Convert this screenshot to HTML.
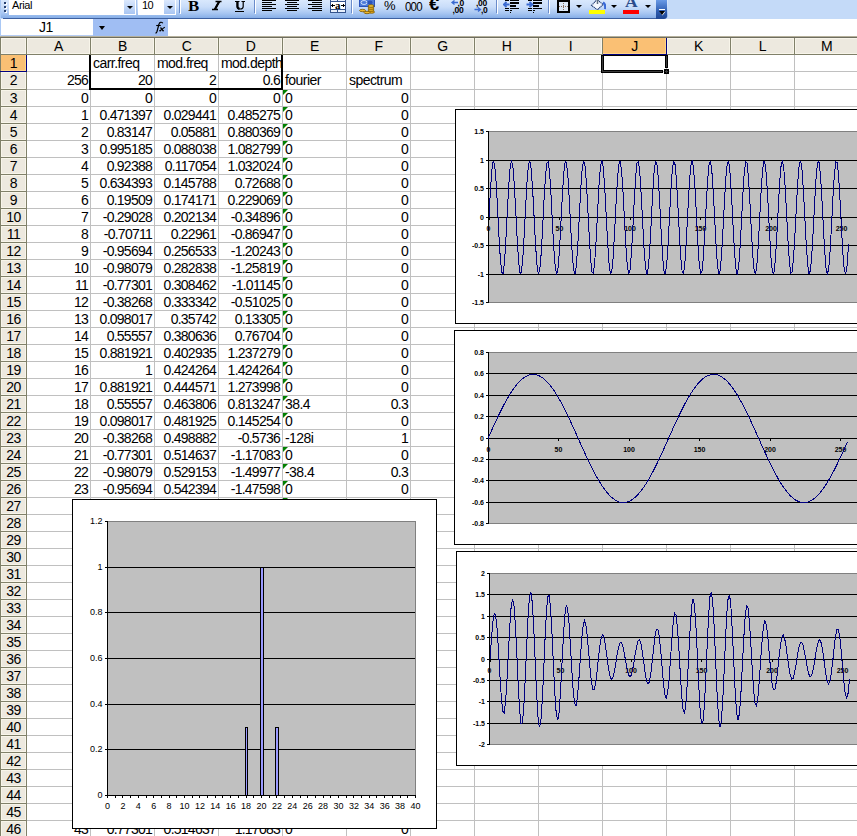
<!DOCTYPE html>
<html><head><meta charset="utf-8"><style>
html,body{margin:0;padding:0;}
body{width:857px;height:836px;overflow:hidden;position:relative;background:#fff;font-family:"Liberation Sans",sans-serif;color:#000;}
.a{position:absolute;}
.t{position:absolute;white-space:nowrap;font-family:"Liberation Sans",sans-serif;color:#000;}
svg{overflow:hidden;}
.cl{font:bold 7px "Liberation Sans",sans-serif;fill:#000;}
.dg{font:bold 8.5px "Liberation Sans",sans-serif;fill:#000;letter-spacing:-0.3px}
.bl{font:9px "Liberation Sans",sans-serif;fill:#000;}
</style></head><body>
<div class="a" style="left:0px;top:0px;width:857px;height:19px;background:#C4DAF8;"></div>
<div class="a" style="left:0;top:0;width:668px;height:18px;background:linear-gradient(#D9E8FD 0px,#C9DDF9 7px,#A9C7F2 13px,#86AEE7 18px);border-radius:0 0 3px 0"></div>
<div class="a" style="left:3px;top:18px;width:654px;height:1px;background:#3D60A0;"></div>
<div class="a" style="left:0px;top:0px;width:1px;height:18px;background:#A9C8F5;"></div>
<div class="a" style="left:5px;top:3px;width:2px;height:2px;background:#FFFFFF;"></div>
<div class="a" style="left:4px;top:2px;width:2px;height:2px;background:#27416F;"></div>
<div class="a" style="left:5px;top:7px;width:2px;height:2px;background:#FFFFFF;"></div>
<div class="a" style="left:4px;top:6px;width:2px;height:2px;background:#27416F;"></div>
<div class="a" style="left:5px;top:11px;width:2px;height:2px;background:#FFFFFF;"></div>
<div class="a" style="left:4px;top:10px;width:2px;height:2px;background:#27416F;"></div>
<div class="a" style="left:9px;top:0px;width:127px;height:15px;background:#FFFFFF;"></div>
<div class="a" style="left:124px;top:0;width:11px;height:14px;background:linear-gradient(#DCE9FD,#A9C6F2)"></div>
<div class="a" style="left:127px;top:6px;width:0;height:0;border-left:3px solid transparent;border-right:3px solid transparent;border-top:3px solid #000"></div>
<div class="t" style="left:12px;top:-2px;width:80px;height:14px;line-height:14px;font-size:11px;text-align:left;letter-spacing:-0.4px;">Arial</div>
<div class="a" style="left:136px;top:0px;width:1px;height:15px;background:#A9C5EF;"></div>
<div class="a" style="left:138px;top:0px;width:38px;height:15px;background:#FFFFFF;"></div>
<div class="a" style="left:164px;top:0;width:11px;height:14px;background:linear-gradient(#DCE9FD,#A9C6F2)"></div>
<div class="a" style="left:167px;top:6px;width:0;height:0;border-left:3px solid transparent;border-right:3px solid transparent;border-top:3px solid #000"></div>
<div class="t" style="left:142px;top:-2px;width:20px;height:14px;line-height:14px;font-size:11px;text-align:left;letter-spacing:-0.5px;">10</div>
<div class="a" style="left:179px;top:0px;width:1px;height:13px;background:#6A8CCB;"></div>
<div class="a" style="left:180px;top:0px;width:1px;height:14px;background:#FFFFFF;"></div>
<div class="t" style="left:188px;top:0px;font:bold 14px 'Liberation Serif',serif;line-height:14px;transform:scaleX(1.2);transform-origin:0 0;">B</div>
<svg class="a" style="left:210px;top:0" width="14" height="12"><path d="M5.5 1.5H11.5M2 9.5H8M9.2 1.5L4.8 9.5" stroke="#000" stroke-width="1.6" fill="none"/><path d="M9.2 1.5L4.8 9.5" stroke="#000" stroke-width="2.1"/></svg>
<svg class="a" style="left:234px;top:0" width="12" height="11"><path d="M1 1.5H5.5M7.5 1.5H11M3.2 1.5V6.5Q3.2 9 6.2 9Q9.2 9 9.2 6.5V1.5" stroke="#000" stroke-width="1.2" fill="none"/><path d="M3.5 1.5V6.5Q3.5 8.5 5.5 8.7" stroke="#000" stroke-width="2.2" fill="none"/></svg>
<div class="a" style="left:235px;top:11px;width:9px;height:1px;background:#000;"></div>
<div class="a" style="left:254px;top:0px;width:1px;height:13px;background:#6A8CCB;"></div>
<div class="a" style="left:255px;top:0px;width:1px;height:14px;background:#FFFFFF;"></div>
<div class="a" style="left:262px;top:0px;width:14px;height:1px;background:#000;"></div>
<div class="a" style="left:262px;top:2px;width:10px;height:1px;background:#000;"></div>
<div class="a" style="left:262px;top:4px;width:14px;height:1px;background:#000;"></div>
<div class="a" style="left:262px;top:6px;width:10px;height:1px;background:#000;"></div>
<div class="a" style="left:262px;top:8px;width:14px;height:1px;background:#000;"></div>
<div class="a" style="left:262px;top:10px;width:10px;height:1px;background:#000;"></div>
<div class="a" style="left:285px;top:0px;width:14px;height:1px;background:#000;"></div>
<div class="a" style="left:287px;top:2px;width:10px;height:1px;background:#000;"></div>
<div class="a" style="left:285px;top:4px;width:14px;height:1px;background:#000;"></div>
<div class="a" style="left:287px;top:6px;width:10px;height:1px;background:#000;"></div>
<div class="a" style="left:285px;top:8px;width:14px;height:1px;background:#000;"></div>
<div class="a" style="left:287px;top:10px;width:10px;height:1px;background:#000;"></div>
<div class="a" style="left:308px;top:0px;width:14px;height:1px;background:#000;"></div>
<div class="a" style="left:312px;top:2px;width:10px;height:1px;background:#000;"></div>
<div class="a" style="left:308px;top:4px;width:14px;height:1px;background:#000;"></div>
<div class="a" style="left:312px;top:6px;width:10px;height:1px;background:#000;"></div>
<div class="a" style="left:308px;top:8px;width:14px;height:1px;background:#000;"></div>
<div class="a" style="left:312px;top:10px;width:10px;height:1px;background:#000;"></div>
<div class="a" style="left:330px;top:0px;width:16px;height:13px;background:#34538C;"></div>
<div class="a" style="left:331px;top:0px;width:6px;height:1px;background:#E8F0FC;"></div>
<div class="a" style="left:338px;top:0px;width:7px;height:1px;background:#E8F0FC;"></div>
<div class="a" style="left:331px;top:2px;width:14px;height:7px;background:#FFFFFF;"></div>
<div class="a" style="left:331px;top:10px;width:6px;height:2px;background:#E8F0FC;"></div>
<div class="a" style="left:338px;top:10px;width:7px;height:2px;background:#E8F0FC;"></div>
<div class="a" style="left:331px;top:5px;width:4px;height:1px;background:#000;"></div>
<div class="a" style="left:332px;top:4px;width:1px;height:3px;background:#000;"></div>
<div class="a" style="left:341px;top:5px;width:4px;height:1px;background:#000;"></div>
<div class="a" style="left:343px;top:4px;width:1px;height:3px;background:#000;"></div>
<div class="t" style="left:335px;top:-1px;font:bold 11px 'Liberation Serif',serif;line-height:12px;">a</div>
<div class="a" style="left:351px;top:0px;width:1px;height:13px;background:#6A8CCB;"></div>
<div class="a" style="left:352px;top:0px;width:1px;height:14px;background:#FFFFFF;"></div>
<svg class="a" style="left:359px;top:0" width="17" height="15" viewBox="0 0 17 15"><rect x="0" y="0" width="16" height="7" fill="#2A52B8"/><rect x="1" y="0" width="14" height="6" fill="#4C7AD8"/><ellipse cx="5" cy="2.5" rx="3" ry="2" fill="none" stroke="#C8DAF6" stroke-width="1"/><ellipse cx="11" cy="2.5" rx="2.5" ry="2" fill="#2A52B8"/><g stroke="#7A5800" stroke-width="0.8"><ellipse cx="12.5" cy="12" rx="3" ry="1.3" fill="#E8A818"/><ellipse cx="12" cy="10" rx="3" ry="1.3" fill="#F0B828"/><ellipse cx="12" cy="8" rx="3" ry="1.3" fill="#F0B828"/><ellipse cx="12" cy="6" rx="3" ry="1.3" fill="#F4C838"/><ellipse cx="3.5" cy="10.5" rx="3" ry="1.2" fill="#F0B828"/><ellipse cx="8" cy="12.5" rx="3" ry="1.2" fill="#F0B828"/></g></svg>
<div class="t" style="left:384px;top:-1px;font-size:13px;line-height:14px;">%</div>
<div class="t" style="left:405px;top:-1px;font-size:11.5px;line-height:14px;letter-spacing:-0.8px;transform:scaleY(1.1);transform-origin:0 0">000</div>
<div class="t" style="left:429px;top:-3px;font:bold 16px 'Liberation Sans',sans-serif;line-height:16px;transform:scaleX(1.15);transform-origin:0 0">&#8364;</div>
<svg class="a" style="left:448px;top:0" width="48" height="15"><path d="M4.5 2.5H10M6.5 0.5L4 2.5L6.5 4.5" stroke="#3A6AD0" stroke-width="1.3" fill="none"/><text x="9.5" y="5.5" class="dg">,0</text><text x="4.5" y="12.5" class="dg">,00</text><text x="28" y="5.5" class="dg">,00</text><path d="M26.5 9.5H32.5M30 7.5L32.5 9.5L30 11.5" stroke="#3A6AD0" stroke-width="1.3" fill="none"/><text x="33" y="12.5" class="dg">,0</text></svg>
<div class="a" style="left:496px;top:0px;width:1px;height:13px;background:#6A8CCB;"></div>
<div class="a" style="left:497px;top:0px;width:1px;height:14px;background:#FFFFFF;"></div>
<div class="a" style="left:505px;top:0px;width:4px;height:1px;background:#000;"></div>
<div class="a" style="left:510px;top:0px;width:9px;height:1px;background:#000;"></div>
<div class="a" style="left:510px;top:2px;width:9px;height:2px;background:#000;"></div>
<div class="a" style="left:510px;top:5px;width:6px;height:2px;background:#000;"></div>
<div class="a" style="left:505px;top:8px;width:4px;height:1px;background:#000;"></div>
<div class="a" style="left:510px;top:8px;width:9px;height:1px;background:#000;"></div>
<div class="a" style="left:505px;top:10px;width:4px;height:1px;background:#000;"></div>
<div class="a" style="left:510px;top:10px;width:2px;height:1px;background:#000;"></div>
<div class="a" style="left:510px;top:12px;width:1px;height:1px;background:#000;"></div>
<svg class="a" style="left:503px;top:0" width="8" height="8"><path d="M6.5 4.5H0.8M3.5 2L0.8 4.5L3.5 7" stroke="#3A6AD0" stroke-width="1.8" fill="none"/></svg>
<div class="a" style="left:528px;top:0px;width:4px;height:1px;background:#000;"></div>
<div class="a" style="left:533px;top:0px;width:9px;height:1px;background:#000;"></div>
<div class="a" style="left:533px;top:2px;width:9px;height:2px;background:#000;"></div>
<div class="a" style="left:533px;top:5px;width:6px;height:2px;background:#000;"></div>
<div class="a" style="left:528px;top:8px;width:4px;height:1px;background:#000;"></div>
<div class="a" style="left:533px;top:8px;width:9px;height:1px;background:#000;"></div>
<div class="a" style="left:528px;top:10px;width:4px;height:1px;background:#000;"></div>
<div class="a" style="left:533px;top:10px;width:2px;height:1px;background:#000;"></div>
<div class="a" style="left:533px;top:12px;width:1px;height:1px;background:#000;"></div>
<svg class="a" style="left:526px;top:0" width="8" height="8"><path d="M0.5 4.5H6.5M3.5 2L6.5 4.5L3.5 7" stroke="#3A6AD0" stroke-width="1.8" fill="none"/></svg>
<div class="a" style="left:548px;top:0px;width:1px;height:13px;background:#6A8CCB;"></div>
<div class="a" style="left:549px;top:0px;width:1px;height:14px;background:#FFFFFF;"></div>
<div class="a" style="left:557px;top:0px;width:13px;height:13px;background:#000;"></div>
<div class="a" style="left:559px;top:2px;width:9px;height:9px;background:#DCE8F8;"></div>
<div class="a" style="left:563px;top:3px;width:1px;height:1px;background:#8A7060;"></div>
<div class="a" style="left:563px;top:5px;width:1px;height:1px;background:#8A7060;"></div>
<div class="a" style="left:563px;top:7px;width:1px;height:1px;background:#8A7060;"></div>
<div class="a" style="left:563px;top:9px;width:1px;height:1px;background:#8A7060;"></div>
<div class="a" style="left:559px;top:6px;width:1px;height:1px;background:#8A7060;"></div>
<div class="a" style="left:561px;top:6px;width:1px;height:1px;background:#8A7060;"></div>
<div class="a" style="left:565px;top:6px;width:1px;height:1px;background:#8A7060;"></div>
<div class="a" style="left:567px;top:6px;width:1px;height:1px;background:#8A7060;"></div>
<div class="a" style="left:563px;top:6px;width:1px;height:1px;background:#8A7060;"></div>
<div class="a" style="left:576px;top:5px;width:0;height:0;border-left:3px solid transparent;border-right:3px solid transparent;border-top:3px solid #000"></div>
<svg class="a" style="left:589px;top:0" width="17" height="11"><path d="M2.5 5.5L8 -0.5L14 4.5L8.5 9.8Z" fill="#F4F8FF" stroke="#1E3A70" stroke-width="1.1" stroke-dasharray="1.2 0.6"/><path d="M8.5 0v4" stroke="#607080" stroke-width="1.5"/><path d="M14 2.5q3 2 2 6.5" stroke="#3A6AD8" stroke-width="2.2" fill="none"/></svg>
<div class="a" style="left:589px;top:10px;width:16px;height:4px;background:#FFFF00;"></div>
<div class="a" style="left:611px;top:5px;width:0;height:0;border-left:3px solid transparent;border-right:3px solid transparent;border-top:3px solid #000"></div>
<div class="t" style="left:625px;top:-4px;font:bold 14px 'Liberation Serif',serif;line-height:14px;color:#2B4C8C;transform:scaleX(1.25);transform-origin:0 0">A</div>
<div class="a" style="left:623px;top:10px;width:16px;height:4px;background:#FF0000;"></div>
<div class="a" style="left:645px;top:5px;width:0;height:0;border-left:3px solid transparent;border-right:3px solid transparent;border-top:3px solid #000"></div>
<div class="a" style="left:656px;top:0;width:11px;height:19px;background:linear-gradient(#6A9AE6,#2D5CB0 60%,#1D4694);border-radius:0 0 3px 0"></div>
<div class="a" style="left:659px;top:9px;width:6px;height:1px;background:#FFFFFF;"></div>
<svg class="a" style="left:658px;top:10px" width="9" height="7"><path d="M1.5 1.5L7.5 1.5L4.5 5.5Z" fill="#fff"/><path d="M1 1L7 1L4 5Z" fill="#000"/></svg>
<div class="a" style="left:0px;top:19px;width:857px;height:17px;background:#FFFFFF;"></div>
<div class="a" style="left:0px;top:19px;width:1px;height:17px;background:#A9C8F5;"></div>
<div class="a" style="left:93px;top:19px;width:75px;height:17px;background:#A0BEF3;"></div>
<div class="a" style="left:99px;top:26px;width:0;height:0;border-left:3.5px solid transparent;border-right:3.5px solid transparent;border-top:4px solid #000"></div>
<div class="t" style="left:0px;top:19px;width:92px;height:16px;line-height:16px;font-size:14px;text-align:center;letter-spacing:-0.5px;">J1</div>
<svg class="a" style="left:150px;top:19px" width="18" height="16"><path d="M12.8 4.3Q12 3 10.5 3.3Q9.3 3.6 8.9 5.5L7 12.5Q6.5 14 5.5 14.2" stroke="#000" stroke-width="1.2" fill="none"/><path d="M6.2 6.5H10.8" stroke="#000" stroke-width="1.1"/><path d="M10.5 8.5L13.2 11.8M14.8 8.3Q13.5 9 11.8 10.5L9.8 11.8" stroke="#000" stroke-width="1.2" fill="none"/><path d="M9.2 11.8H11M12.5 11.8H14" stroke="#000" stroke-width="1"/></svg>
<div class="a" style="left:0px;top:35px;width:93px;height:1px;background:#B5CDF5;"></div>
<div class="a" style="left:0px;top:36px;width:857px;height:1px;background:#B5B09B;"></div>
<div class="a" style="left:0px;top:37px;width:857px;height:1px;background:#6E6D5E;"></div>
<div class="a" style="left:0px;top:38px;width:857px;height:16px;background:#EDE9DF;"></div>
<div class="a" style="left:0px;top:54px;width:857px;height:1px;background:#808069;"></div>
<div class="a" style="left:1px;top:38px;width:857px;height:1px;background:#F8F5EA;"></div>
<div class="a" style="left:1px;top:53px;width:857px;height:1px;background:#F8F5EA;"></div>
<div class="a" style="left:25px;top:38px;width:1px;height:16px;background:#F8F5EA;"></div>
<div class="a" style="left:27px;top:38px;width:1px;height:16px;background:#F8F5EA;"></div>
<div class="a" style="left:89px;top:38px;width:1px;height:16px;background:#F8F5EA;"></div>
<div class="a" style="left:91px;top:38px;width:1px;height:16px;background:#F8F5EA;"></div>
<div class="a" style="left:153px;top:38px;width:1px;height:16px;background:#F8F5EA;"></div>
<div class="a" style="left:155px;top:38px;width:1px;height:16px;background:#F8F5EA;"></div>
<div class="a" style="left:217px;top:38px;width:1px;height:16px;background:#F8F5EA;"></div>
<div class="a" style="left:219px;top:38px;width:1px;height:16px;background:#F8F5EA;"></div>
<div class="a" style="left:281px;top:38px;width:1px;height:16px;background:#F8F5EA;"></div>
<div class="a" style="left:283px;top:38px;width:1px;height:16px;background:#F8F5EA;"></div>
<div class="a" style="left:345px;top:38px;width:1px;height:16px;background:#F8F5EA;"></div>
<div class="a" style="left:347px;top:38px;width:1px;height:16px;background:#F8F5EA;"></div>
<div class="a" style="left:409px;top:38px;width:1px;height:16px;background:#F8F5EA;"></div>
<div class="a" style="left:411px;top:38px;width:1px;height:16px;background:#F8F5EA;"></div>
<div class="a" style="left:473px;top:38px;width:1px;height:16px;background:#F8F5EA;"></div>
<div class="a" style="left:475px;top:38px;width:1px;height:16px;background:#F8F5EA;"></div>
<div class="a" style="left:537px;top:38px;width:1px;height:16px;background:#F8F5EA;"></div>
<div class="a" style="left:539px;top:38px;width:1px;height:16px;background:#F8F5EA;"></div>
<div class="a" style="left:601px;top:38px;width:1px;height:16px;background:#F8F5EA;"></div>
<div class="a" style="left:603px;top:38px;width:1px;height:16px;background:#F8F5EA;"></div>
<div class="a" style="left:665px;top:38px;width:1px;height:16px;background:#F8F5EA;"></div>
<div class="a" style="left:667px;top:38px;width:1px;height:16px;background:#F8F5EA;"></div>
<div class="a" style="left:729px;top:38px;width:1px;height:16px;background:#F8F5EA;"></div>
<div class="a" style="left:731px;top:38px;width:1px;height:16px;background:#F8F5EA;"></div>
<div class="a" style="left:793px;top:38px;width:1px;height:16px;background:#F8F5EA;"></div>
<div class="a" style="left:795px;top:38px;width:1px;height:16px;background:#F8F5EA;"></div>
<div class="a" style="left:857px;top:38px;width:1px;height:16px;background:#F8F5EA;"></div>
<div class="a" style="left:859px;top:38px;width:1px;height:16px;background:#F8F5EA;"></div>
<div class="a" style="left:1px;top:38px;width:1px;height:16px;background:#F8F5EA;"></div>
<div class="a" style="left:0px;top:38px;width:1px;height:17px;background:#808069;"></div>
<div class="a" style="left:26px;top:38px;width:1px;height:16px;background:#808069;"></div>
<div class="a" style="left:90px;top:38px;width:1px;height:16px;background:#808069;"></div>
<div class="a" style="left:154px;top:38px;width:1px;height:16px;background:#808069;"></div>
<div class="a" style="left:218px;top:38px;width:1px;height:16px;background:#808069;"></div>
<div class="a" style="left:282px;top:38px;width:1px;height:16px;background:#808069;"></div>
<div class="a" style="left:346px;top:38px;width:1px;height:16px;background:#808069;"></div>
<div class="a" style="left:410px;top:38px;width:1px;height:16px;background:#808069;"></div>
<div class="a" style="left:474px;top:38px;width:1px;height:16px;background:#808069;"></div>
<div class="a" style="left:538px;top:38px;width:1px;height:16px;background:#808069;"></div>
<div class="a" style="left:602px;top:38px;width:1px;height:16px;background:#808069;"></div>
<div class="a" style="left:666px;top:38px;width:1px;height:16px;background:#808069;"></div>
<div class="a" style="left:730px;top:38px;width:1px;height:16px;background:#808069;"></div>
<div class="a" style="left:794px;top:38px;width:1px;height:16px;background:#808069;"></div>
<div class="a" style="left:858px;top:38px;width:1px;height:16px;background:#808069;"></div>
<div class="a" style="left:603px;top:38px;width:63px;height:16px;background:#FAC074;"></div>
<div class="a" style="left:603px;top:53px;width:63px;height:1px;background:#FED688;"></div>
<div class="a" style="left:665px;top:38px;width:1px;height:16px;background:#FED688;"></div>
<div class="a" style="left:666px;top:38px;width:1px;height:17px;background:#000080;"></div>
<div class="a" style="left:603px;top:54px;width:64px;height:1px;background:#000080;"></div>
<div class="t" style="left:27px;top:38px;width:63px;height:16px;line-height:16px;font-size:14px;text-align:center;letter-spacing:-0.5px;">A</div>
<div class="t" style="left:91px;top:38px;width:63px;height:16px;line-height:16px;font-size:14px;text-align:center;letter-spacing:-0.5px;">B</div>
<div class="t" style="left:155px;top:38px;width:63px;height:16px;line-height:16px;font-size:14px;text-align:center;letter-spacing:-0.5px;">C</div>
<div class="t" style="left:219px;top:38px;width:63px;height:16px;line-height:16px;font-size:14px;text-align:center;letter-spacing:-0.5px;">D</div>
<div class="t" style="left:283px;top:38px;width:63px;height:16px;line-height:16px;font-size:14px;text-align:center;letter-spacing:-0.5px;">E</div>
<div class="t" style="left:347px;top:38px;width:63px;height:16px;line-height:16px;font-size:14px;text-align:center;letter-spacing:-0.5px;">F</div>
<div class="t" style="left:411px;top:38px;width:63px;height:16px;line-height:16px;font-size:14px;text-align:center;letter-spacing:-0.5px;">G</div>
<div class="t" style="left:475px;top:38px;width:63px;height:16px;line-height:16px;font-size:14px;text-align:center;letter-spacing:-0.5px;">H</div>
<div class="t" style="left:539px;top:38px;width:63px;height:16px;line-height:16px;font-size:14px;text-align:center;letter-spacing:-0.5px;">I</div>
<div class="t" style="left:603px;top:38px;width:63px;height:16px;line-height:16px;font-size:14px;text-align:center;letter-spacing:-0.5px;">J</div>
<div class="t" style="left:667px;top:38px;width:63px;height:16px;line-height:16px;font-size:14px;text-align:center;letter-spacing:-0.5px;">K</div>
<div class="t" style="left:731px;top:38px;width:63px;height:16px;line-height:16px;font-size:14px;text-align:center;letter-spacing:-0.5px;">L</div>
<div class="t" style="left:795px;top:38px;width:63px;height:16px;line-height:16px;font-size:14px;text-align:center;letter-spacing:-0.5px;">M</div>
<div class="a" style="left:0px;top:55px;width:26px;height:781px;background:#EDE9DF;"></div>
<div class="a" style="left:0px;top:55px;width:1px;height:781px;background:#808069;"></div>
<div class="a" style="left:26px;top:55px;width:1px;height:781px;background:#808069;"></div>
<div class="a" style="left:1px;top:55px;width:1px;height:781px;background:#F8F5EA;"></div>
<div class="a" style="left:25px;top:55px;width:1px;height:781px;background:#F8F5EA;"></div>
<div class="a" style="left:0px;top:71px;width:27px;height:1px;background:#808069;"></div>
<div class="a" style="left:1px;top:55px;width:25px;height:1px;background:#F8F5EA;"></div>
<div class="a" style="left:1px;top:70px;width:25px;height:1px;background:#F8F5EA;"></div>
<div class="a" style="left:0px;top:89px;width:27px;height:1px;background:#808069;"></div>
<div class="a" style="left:1px;top:72px;width:25px;height:1px;background:#F8F5EA;"></div>
<div class="a" style="left:1px;top:88px;width:25px;height:1px;background:#F8F5EA;"></div>
<div class="a" style="left:0px;top:106px;width:27px;height:1px;background:#808069;"></div>
<div class="a" style="left:1px;top:90px;width:25px;height:1px;background:#F8F5EA;"></div>
<div class="a" style="left:1px;top:105px;width:25px;height:1px;background:#F8F5EA;"></div>
<div class="a" style="left:0px;top:123px;width:27px;height:1px;background:#808069;"></div>
<div class="a" style="left:1px;top:107px;width:25px;height:1px;background:#F8F5EA;"></div>
<div class="a" style="left:1px;top:122px;width:25px;height:1px;background:#F8F5EA;"></div>
<div class="a" style="left:0px;top:140px;width:27px;height:1px;background:#808069;"></div>
<div class="a" style="left:1px;top:124px;width:25px;height:1px;background:#F8F5EA;"></div>
<div class="a" style="left:1px;top:139px;width:25px;height:1px;background:#F8F5EA;"></div>
<div class="a" style="left:0px;top:157px;width:27px;height:1px;background:#808069;"></div>
<div class="a" style="left:1px;top:141px;width:25px;height:1px;background:#F8F5EA;"></div>
<div class="a" style="left:1px;top:156px;width:25px;height:1px;background:#F8F5EA;"></div>
<div class="a" style="left:0px;top:174px;width:27px;height:1px;background:#808069;"></div>
<div class="a" style="left:1px;top:158px;width:25px;height:1px;background:#F8F5EA;"></div>
<div class="a" style="left:1px;top:173px;width:25px;height:1px;background:#F8F5EA;"></div>
<div class="a" style="left:0px;top:191px;width:27px;height:1px;background:#808069;"></div>
<div class="a" style="left:1px;top:175px;width:25px;height:1px;background:#F8F5EA;"></div>
<div class="a" style="left:1px;top:190px;width:25px;height:1px;background:#F8F5EA;"></div>
<div class="a" style="left:0px;top:208px;width:27px;height:1px;background:#808069;"></div>
<div class="a" style="left:1px;top:192px;width:25px;height:1px;background:#F8F5EA;"></div>
<div class="a" style="left:1px;top:207px;width:25px;height:1px;background:#F8F5EA;"></div>
<div class="a" style="left:0px;top:225px;width:27px;height:1px;background:#808069;"></div>
<div class="a" style="left:1px;top:209px;width:25px;height:1px;background:#F8F5EA;"></div>
<div class="a" style="left:1px;top:224px;width:25px;height:1px;background:#F8F5EA;"></div>
<div class="a" style="left:0px;top:242px;width:27px;height:1px;background:#808069;"></div>
<div class="a" style="left:1px;top:226px;width:25px;height:1px;background:#F8F5EA;"></div>
<div class="a" style="left:1px;top:241px;width:25px;height:1px;background:#F8F5EA;"></div>
<div class="a" style="left:0px;top:259px;width:27px;height:1px;background:#808069;"></div>
<div class="a" style="left:1px;top:243px;width:25px;height:1px;background:#F8F5EA;"></div>
<div class="a" style="left:1px;top:258px;width:25px;height:1px;background:#F8F5EA;"></div>
<div class="a" style="left:0px;top:276px;width:27px;height:1px;background:#808069;"></div>
<div class="a" style="left:1px;top:260px;width:25px;height:1px;background:#F8F5EA;"></div>
<div class="a" style="left:1px;top:275px;width:25px;height:1px;background:#F8F5EA;"></div>
<div class="a" style="left:0px;top:293px;width:27px;height:1px;background:#808069;"></div>
<div class="a" style="left:1px;top:277px;width:25px;height:1px;background:#F8F5EA;"></div>
<div class="a" style="left:1px;top:292px;width:25px;height:1px;background:#F8F5EA;"></div>
<div class="a" style="left:0px;top:310px;width:27px;height:1px;background:#808069;"></div>
<div class="a" style="left:1px;top:294px;width:25px;height:1px;background:#F8F5EA;"></div>
<div class="a" style="left:1px;top:309px;width:25px;height:1px;background:#F8F5EA;"></div>
<div class="a" style="left:0px;top:327px;width:27px;height:1px;background:#808069;"></div>
<div class="a" style="left:1px;top:311px;width:25px;height:1px;background:#F8F5EA;"></div>
<div class="a" style="left:1px;top:326px;width:25px;height:1px;background:#F8F5EA;"></div>
<div class="a" style="left:0px;top:344px;width:27px;height:1px;background:#808069;"></div>
<div class="a" style="left:1px;top:328px;width:25px;height:1px;background:#F8F5EA;"></div>
<div class="a" style="left:1px;top:343px;width:25px;height:1px;background:#F8F5EA;"></div>
<div class="a" style="left:0px;top:361px;width:27px;height:1px;background:#808069;"></div>
<div class="a" style="left:1px;top:345px;width:25px;height:1px;background:#F8F5EA;"></div>
<div class="a" style="left:1px;top:360px;width:25px;height:1px;background:#F8F5EA;"></div>
<div class="a" style="left:0px;top:378px;width:27px;height:1px;background:#808069;"></div>
<div class="a" style="left:1px;top:362px;width:25px;height:1px;background:#F8F5EA;"></div>
<div class="a" style="left:1px;top:377px;width:25px;height:1px;background:#F8F5EA;"></div>
<div class="a" style="left:0px;top:395px;width:27px;height:1px;background:#808069;"></div>
<div class="a" style="left:1px;top:379px;width:25px;height:1px;background:#F8F5EA;"></div>
<div class="a" style="left:1px;top:394px;width:25px;height:1px;background:#F8F5EA;"></div>
<div class="a" style="left:0px;top:412px;width:27px;height:1px;background:#808069;"></div>
<div class="a" style="left:1px;top:396px;width:25px;height:1px;background:#F8F5EA;"></div>
<div class="a" style="left:1px;top:411px;width:25px;height:1px;background:#F8F5EA;"></div>
<div class="a" style="left:0px;top:429px;width:27px;height:1px;background:#808069;"></div>
<div class="a" style="left:1px;top:413px;width:25px;height:1px;background:#F8F5EA;"></div>
<div class="a" style="left:1px;top:428px;width:25px;height:1px;background:#F8F5EA;"></div>
<div class="a" style="left:0px;top:446px;width:27px;height:1px;background:#808069;"></div>
<div class="a" style="left:1px;top:430px;width:25px;height:1px;background:#F8F5EA;"></div>
<div class="a" style="left:1px;top:445px;width:25px;height:1px;background:#F8F5EA;"></div>
<div class="a" style="left:0px;top:463px;width:27px;height:1px;background:#808069;"></div>
<div class="a" style="left:1px;top:447px;width:25px;height:1px;background:#F8F5EA;"></div>
<div class="a" style="left:1px;top:462px;width:25px;height:1px;background:#F8F5EA;"></div>
<div class="a" style="left:0px;top:480px;width:27px;height:1px;background:#808069;"></div>
<div class="a" style="left:1px;top:464px;width:25px;height:1px;background:#F8F5EA;"></div>
<div class="a" style="left:1px;top:479px;width:25px;height:1px;background:#F8F5EA;"></div>
<div class="a" style="left:0px;top:497px;width:27px;height:1px;background:#808069;"></div>
<div class="a" style="left:1px;top:481px;width:25px;height:1px;background:#F8F5EA;"></div>
<div class="a" style="left:1px;top:496px;width:25px;height:1px;background:#F8F5EA;"></div>
<div class="a" style="left:0px;top:514px;width:27px;height:1px;background:#808069;"></div>
<div class="a" style="left:1px;top:498px;width:25px;height:1px;background:#F8F5EA;"></div>
<div class="a" style="left:1px;top:513px;width:25px;height:1px;background:#F8F5EA;"></div>
<div class="a" style="left:0px;top:531px;width:27px;height:1px;background:#808069;"></div>
<div class="a" style="left:1px;top:515px;width:25px;height:1px;background:#F8F5EA;"></div>
<div class="a" style="left:1px;top:530px;width:25px;height:1px;background:#F8F5EA;"></div>
<div class="a" style="left:0px;top:548px;width:27px;height:1px;background:#808069;"></div>
<div class="a" style="left:1px;top:532px;width:25px;height:1px;background:#F8F5EA;"></div>
<div class="a" style="left:1px;top:547px;width:25px;height:1px;background:#F8F5EA;"></div>
<div class="a" style="left:0px;top:565px;width:27px;height:1px;background:#808069;"></div>
<div class="a" style="left:1px;top:549px;width:25px;height:1px;background:#F8F5EA;"></div>
<div class="a" style="left:1px;top:564px;width:25px;height:1px;background:#F8F5EA;"></div>
<div class="a" style="left:0px;top:582px;width:27px;height:1px;background:#808069;"></div>
<div class="a" style="left:1px;top:566px;width:25px;height:1px;background:#F8F5EA;"></div>
<div class="a" style="left:1px;top:581px;width:25px;height:1px;background:#F8F5EA;"></div>
<div class="a" style="left:0px;top:599px;width:27px;height:1px;background:#808069;"></div>
<div class="a" style="left:1px;top:583px;width:25px;height:1px;background:#F8F5EA;"></div>
<div class="a" style="left:1px;top:598px;width:25px;height:1px;background:#F8F5EA;"></div>
<div class="a" style="left:0px;top:616px;width:27px;height:1px;background:#808069;"></div>
<div class="a" style="left:1px;top:600px;width:25px;height:1px;background:#F8F5EA;"></div>
<div class="a" style="left:1px;top:615px;width:25px;height:1px;background:#F8F5EA;"></div>
<div class="a" style="left:0px;top:633px;width:27px;height:1px;background:#808069;"></div>
<div class="a" style="left:1px;top:617px;width:25px;height:1px;background:#F8F5EA;"></div>
<div class="a" style="left:1px;top:632px;width:25px;height:1px;background:#F8F5EA;"></div>
<div class="a" style="left:0px;top:650px;width:27px;height:1px;background:#808069;"></div>
<div class="a" style="left:1px;top:634px;width:25px;height:1px;background:#F8F5EA;"></div>
<div class="a" style="left:1px;top:649px;width:25px;height:1px;background:#F8F5EA;"></div>
<div class="a" style="left:0px;top:667px;width:27px;height:1px;background:#808069;"></div>
<div class="a" style="left:1px;top:651px;width:25px;height:1px;background:#F8F5EA;"></div>
<div class="a" style="left:1px;top:666px;width:25px;height:1px;background:#F8F5EA;"></div>
<div class="a" style="left:0px;top:684px;width:27px;height:1px;background:#808069;"></div>
<div class="a" style="left:1px;top:668px;width:25px;height:1px;background:#F8F5EA;"></div>
<div class="a" style="left:1px;top:683px;width:25px;height:1px;background:#F8F5EA;"></div>
<div class="a" style="left:0px;top:701px;width:27px;height:1px;background:#808069;"></div>
<div class="a" style="left:1px;top:685px;width:25px;height:1px;background:#F8F5EA;"></div>
<div class="a" style="left:1px;top:700px;width:25px;height:1px;background:#F8F5EA;"></div>
<div class="a" style="left:0px;top:718px;width:27px;height:1px;background:#808069;"></div>
<div class="a" style="left:1px;top:702px;width:25px;height:1px;background:#F8F5EA;"></div>
<div class="a" style="left:1px;top:717px;width:25px;height:1px;background:#F8F5EA;"></div>
<div class="a" style="left:0px;top:735px;width:27px;height:1px;background:#808069;"></div>
<div class="a" style="left:1px;top:719px;width:25px;height:1px;background:#F8F5EA;"></div>
<div class="a" style="left:1px;top:734px;width:25px;height:1px;background:#F8F5EA;"></div>
<div class="a" style="left:0px;top:752px;width:27px;height:1px;background:#808069;"></div>
<div class="a" style="left:1px;top:736px;width:25px;height:1px;background:#F8F5EA;"></div>
<div class="a" style="left:1px;top:751px;width:25px;height:1px;background:#F8F5EA;"></div>
<div class="a" style="left:0px;top:769px;width:27px;height:1px;background:#808069;"></div>
<div class="a" style="left:1px;top:753px;width:25px;height:1px;background:#F8F5EA;"></div>
<div class="a" style="left:1px;top:768px;width:25px;height:1px;background:#F8F5EA;"></div>
<div class="a" style="left:0px;top:786px;width:27px;height:1px;background:#808069;"></div>
<div class="a" style="left:1px;top:770px;width:25px;height:1px;background:#F8F5EA;"></div>
<div class="a" style="left:1px;top:785px;width:25px;height:1px;background:#F8F5EA;"></div>
<div class="a" style="left:0px;top:803px;width:27px;height:1px;background:#808069;"></div>
<div class="a" style="left:1px;top:787px;width:25px;height:1px;background:#F8F5EA;"></div>
<div class="a" style="left:1px;top:802px;width:25px;height:1px;background:#F8F5EA;"></div>
<div class="a" style="left:0px;top:820px;width:27px;height:1px;background:#808069;"></div>
<div class="a" style="left:1px;top:804px;width:25px;height:1px;background:#F8F5EA;"></div>
<div class="a" style="left:1px;top:819px;width:25px;height:1px;background:#F8F5EA;"></div>
<div class="a" style="left:0px;top:837px;width:27px;height:1px;background:#808069;"></div>
<div class="a" style="left:1px;top:821px;width:25px;height:1px;background:#F8F5EA;"></div>
<div class="a" style="left:1px;top:836px;width:25px;height:1px;background:#F8F5EA;"></div>
<div class="a" style="left:0px;top:55px;width:26px;height:16px;background:#FAC074;"></div>
<div class="a" style="left:1px;top:70px;width:25px;height:1px;background:#FED688;"></div>
<div class="a" style="left:25px;top:55px;width:1px;height:16px;background:#FED688;"></div>
<div class="a" style="left:0px;top:55px;width:1px;height:16px;background:#808069;"></div>
<div class="a" style="left:26px;top:55px;width:1px;height:17px;background:#000080;"></div>
<div class="a" style="left:0px;top:71px;width:27px;height:1px;background:#000080;"></div>
<div class="t" style="left:1px;top:55px;width:25px;height:16px;line-height:16px;font-size:14px;text-align:center;letter-spacing:-0.5px;">1</div>
<div class="t" style="left:1px;top:72px;width:25px;height:17px;line-height:17px;font-size:14px;text-align:center;letter-spacing:-0.5px;">2</div>
<div class="t" style="left:1px;top:90px;width:25px;height:16px;line-height:16px;font-size:14px;text-align:center;letter-spacing:-0.5px;">3</div>
<div class="t" style="left:1px;top:107px;width:25px;height:16px;line-height:16px;font-size:14px;text-align:center;letter-spacing:-0.5px;">4</div>
<div class="t" style="left:1px;top:124px;width:25px;height:16px;line-height:16px;font-size:14px;text-align:center;letter-spacing:-0.5px;">5</div>
<div class="t" style="left:1px;top:141px;width:25px;height:16px;line-height:16px;font-size:14px;text-align:center;letter-spacing:-0.5px;">6</div>
<div class="t" style="left:1px;top:158px;width:25px;height:16px;line-height:16px;font-size:14px;text-align:center;letter-spacing:-0.5px;">7</div>
<div class="t" style="left:1px;top:175px;width:25px;height:16px;line-height:16px;font-size:14px;text-align:center;letter-spacing:-0.5px;">8</div>
<div class="t" style="left:1px;top:192px;width:25px;height:16px;line-height:16px;font-size:14px;text-align:center;letter-spacing:-0.5px;">9</div>
<div class="t" style="left:1px;top:209px;width:25px;height:16px;line-height:16px;font-size:14px;text-align:center;letter-spacing:-0.5px;">10</div>
<div class="t" style="left:1px;top:226px;width:25px;height:16px;line-height:16px;font-size:14px;text-align:center;letter-spacing:-0.5px;">11</div>
<div class="t" style="left:1px;top:243px;width:25px;height:16px;line-height:16px;font-size:14px;text-align:center;letter-spacing:-0.5px;">12</div>
<div class="t" style="left:1px;top:260px;width:25px;height:16px;line-height:16px;font-size:14px;text-align:center;letter-spacing:-0.5px;">13</div>
<div class="t" style="left:1px;top:277px;width:25px;height:16px;line-height:16px;font-size:14px;text-align:center;letter-spacing:-0.5px;">14</div>
<div class="t" style="left:1px;top:294px;width:25px;height:16px;line-height:16px;font-size:14px;text-align:center;letter-spacing:-0.5px;">15</div>
<div class="t" style="left:1px;top:311px;width:25px;height:16px;line-height:16px;font-size:14px;text-align:center;letter-spacing:-0.5px;">16</div>
<div class="t" style="left:1px;top:328px;width:25px;height:16px;line-height:16px;font-size:14px;text-align:center;letter-spacing:-0.5px;">17</div>
<div class="t" style="left:1px;top:345px;width:25px;height:16px;line-height:16px;font-size:14px;text-align:center;letter-spacing:-0.5px;">18</div>
<div class="t" style="left:1px;top:362px;width:25px;height:16px;line-height:16px;font-size:14px;text-align:center;letter-spacing:-0.5px;">19</div>
<div class="t" style="left:1px;top:379px;width:25px;height:16px;line-height:16px;font-size:14px;text-align:center;letter-spacing:-0.5px;">20</div>
<div class="t" style="left:1px;top:396px;width:25px;height:16px;line-height:16px;font-size:14px;text-align:center;letter-spacing:-0.5px;">21</div>
<div class="t" style="left:1px;top:413px;width:25px;height:16px;line-height:16px;font-size:14px;text-align:center;letter-spacing:-0.5px;">22</div>
<div class="t" style="left:1px;top:430px;width:25px;height:16px;line-height:16px;font-size:14px;text-align:center;letter-spacing:-0.5px;">23</div>
<div class="t" style="left:1px;top:447px;width:25px;height:16px;line-height:16px;font-size:14px;text-align:center;letter-spacing:-0.5px;">24</div>
<div class="t" style="left:1px;top:464px;width:25px;height:16px;line-height:16px;font-size:14px;text-align:center;letter-spacing:-0.5px;">25</div>
<div class="t" style="left:1px;top:481px;width:25px;height:16px;line-height:16px;font-size:14px;text-align:center;letter-spacing:-0.5px;">26</div>
<div class="t" style="left:1px;top:498px;width:25px;height:16px;line-height:16px;font-size:14px;text-align:center;letter-spacing:-0.5px;">27</div>
<div class="t" style="left:1px;top:515px;width:25px;height:16px;line-height:16px;font-size:14px;text-align:center;letter-spacing:-0.5px;">28</div>
<div class="t" style="left:1px;top:532px;width:25px;height:16px;line-height:16px;font-size:14px;text-align:center;letter-spacing:-0.5px;">29</div>
<div class="t" style="left:1px;top:549px;width:25px;height:16px;line-height:16px;font-size:14px;text-align:center;letter-spacing:-0.5px;">30</div>
<div class="t" style="left:1px;top:566px;width:25px;height:16px;line-height:16px;font-size:14px;text-align:center;letter-spacing:-0.5px;">31</div>
<div class="t" style="left:1px;top:583px;width:25px;height:16px;line-height:16px;font-size:14px;text-align:center;letter-spacing:-0.5px;">32</div>
<div class="t" style="left:1px;top:600px;width:25px;height:16px;line-height:16px;font-size:14px;text-align:center;letter-spacing:-0.5px;">33</div>
<div class="t" style="left:1px;top:617px;width:25px;height:16px;line-height:16px;font-size:14px;text-align:center;letter-spacing:-0.5px;">34</div>
<div class="t" style="left:1px;top:634px;width:25px;height:16px;line-height:16px;font-size:14px;text-align:center;letter-spacing:-0.5px;">35</div>
<div class="t" style="left:1px;top:651px;width:25px;height:16px;line-height:16px;font-size:14px;text-align:center;letter-spacing:-0.5px;">36</div>
<div class="t" style="left:1px;top:668px;width:25px;height:16px;line-height:16px;font-size:14px;text-align:center;letter-spacing:-0.5px;">37</div>
<div class="t" style="left:1px;top:685px;width:25px;height:16px;line-height:16px;font-size:14px;text-align:center;letter-spacing:-0.5px;">38</div>
<div class="t" style="left:1px;top:702px;width:25px;height:16px;line-height:16px;font-size:14px;text-align:center;letter-spacing:-0.5px;">39</div>
<div class="t" style="left:1px;top:719px;width:25px;height:16px;line-height:16px;font-size:14px;text-align:center;letter-spacing:-0.5px;">40</div>
<div class="t" style="left:1px;top:736px;width:25px;height:16px;line-height:16px;font-size:14px;text-align:center;letter-spacing:-0.5px;">41</div>
<div class="t" style="left:1px;top:753px;width:25px;height:16px;line-height:16px;font-size:14px;text-align:center;letter-spacing:-0.5px;">42</div>
<div class="t" style="left:1px;top:770px;width:25px;height:16px;line-height:16px;font-size:14px;text-align:center;letter-spacing:-0.5px;">43</div>
<div class="t" style="left:1px;top:787px;width:25px;height:16px;line-height:16px;font-size:14px;text-align:center;letter-spacing:-0.5px;">44</div>
<div class="t" style="left:1px;top:804px;width:25px;height:16px;line-height:16px;font-size:14px;text-align:center;letter-spacing:-0.5px;">45</div>
<div class="t" style="left:1px;top:821px;width:25px;height:16px;line-height:16px;font-size:14px;text-align:center;letter-spacing:-0.5px;">46</div>
<div class="a" style="left:90px;top:55px;width:1px;height:781px;background:#C0C0C0;"></div>
<div class="a" style="left:154px;top:55px;width:1px;height:781px;background:#C0C0C0;"></div>
<div class="a" style="left:218px;top:55px;width:1px;height:781px;background:#C0C0C0;"></div>
<div class="a" style="left:282px;top:55px;width:1px;height:781px;background:#C0C0C0;"></div>
<div class="a" style="left:346px;top:55px;width:1px;height:781px;background:#C0C0C0;"></div>
<div class="a" style="left:410px;top:55px;width:1px;height:781px;background:#C0C0C0;"></div>
<div class="a" style="left:474px;top:55px;width:1px;height:781px;background:#C0C0C0;"></div>
<div class="a" style="left:538px;top:55px;width:1px;height:781px;background:#C0C0C0;"></div>
<div class="a" style="left:602px;top:55px;width:1px;height:781px;background:#C0C0C0;"></div>
<div class="a" style="left:666px;top:55px;width:1px;height:781px;background:#C0C0C0;"></div>
<div class="a" style="left:730px;top:55px;width:1px;height:781px;background:#C0C0C0;"></div>
<div class="a" style="left:794px;top:55px;width:1px;height:781px;background:#C0C0C0;"></div>
<div class="a" style="left:858px;top:55px;width:1px;height:781px;background:#C0C0C0;"></div>
<div class="a" style="left:27px;top:71px;width:830px;height:1px;background:#C0C0C0;"></div>
<div class="a" style="left:27px;top:89px;width:830px;height:1px;background:#C0C0C0;"></div>
<div class="a" style="left:27px;top:106px;width:830px;height:1px;background:#C0C0C0;"></div>
<div class="a" style="left:27px;top:123px;width:830px;height:1px;background:#C0C0C0;"></div>
<div class="a" style="left:27px;top:140px;width:830px;height:1px;background:#C0C0C0;"></div>
<div class="a" style="left:27px;top:157px;width:830px;height:1px;background:#C0C0C0;"></div>
<div class="a" style="left:27px;top:174px;width:830px;height:1px;background:#C0C0C0;"></div>
<div class="a" style="left:27px;top:191px;width:830px;height:1px;background:#C0C0C0;"></div>
<div class="a" style="left:27px;top:208px;width:830px;height:1px;background:#C0C0C0;"></div>
<div class="a" style="left:27px;top:225px;width:830px;height:1px;background:#C0C0C0;"></div>
<div class="a" style="left:27px;top:242px;width:830px;height:1px;background:#C0C0C0;"></div>
<div class="a" style="left:27px;top:259px;width:830px;height:1px;background:#C0C0C0;"></div>
<div class="a" style="left:27px;top:276px;width:830px;height:1px;background:#C0C0C0;"></div>
<div class="a" style="left:27px;top:293px;width:830px;height:1px;background:#C0C0C0;"></div>
<div class="a" style="left:27px;top:310px;width:830px;height:1px;background:#C0C0C0;"></div>
<div class="a" style="left:27px;top:327px;width:830px;height:1px;background:#C0C0C0;"></div>
<div class="a" style="left:27px;top:344px;width:830px;height:1px;background:#C0C0C0;"></div>
<div class="a" style="left:27px;top:361px;width:830px;height:1px;background:#C0C0C0;"></div>
<div class="a" style="left:27px;top:378px;width:830px;height:1px;background:#C0C0C0;"></div>
<div class="a" style="left:27px;top:395px;width:830px;height:1px;background:#C0C0C0;"></div>
<div class="a" style="left:27px;top:412px;width:830px;height:1px;background:#C0C0C0;"></div>
<div class="a" style="left:27px;top:429px;width:830px;height:1px;background:#C0C0C0;"></div>
<div class="a" style="left:27px;top:446px;width:830px;height:1px;background:#C0C0C0;"></div>
<div class="a" style="left:27px;top:463px;width:830px;height:1px;background:#C0C0C0;"></div>
<div class="a" style="left:27px;top:480px;width:830px;height:1px;background:#C0C0C0;"></div>
<div class="a" style="left:27px;top:497px;width:830px;height:1px;background:#C0C0C0;"></div>
<div class="a" style="left:27px;top:514px;width:830px;height:1px;background:#C0C0C0;"></div>
<div class="a" style="left:27px;top:531px;width:830px;height:1px;background:#C0C0C0;"></div>
<div class="a" style="left:27px;top:548px;width:830px;height:1px;background:#C0C0C0;"></div>
<div class="a" style="left:27px;top:565px;width:830px;height:1px;background:#C0C0C0;"></div>
<div class="a" style="left:27px;top:582px;width:830px;height:1px;background:#C0C0C0;"></div>
<div class="a" style="left:27px;top:599px;width:830px;height:1px;background:#C0C0C0;"></div>
<div class="a" style="left:27px;top:616px;width:830px;height:1px;background:#C0C0C0;"></div>
<div class="a" style="left:27px;top:633px;width:830px;height:1px;background:#C0C0C0;"></div>
<div class="a" style="left:27px;top:650px;width:830px;height:1px;background:#C0C0C0;"></div>
<div class="a" style="left:27px;top:667px;width:830px;height:1px;background:#C0C0C0;"></div>
<div class="a" style="left:27px;top:684px;width:830px;height:1px;background:#C0C0C0;"></div>
<div class="a" style="left:27px;top:701px;width:830px;height:1px;background:#C0C0C0;"></div>
<div class="a" style="left:27px;top:718px;width:830px;height:1px;background:#C0C0C0;"></div>
<div class="a" style="left:27px;top:735px;width:830px;height:1px;background:#C0C0C0;"></div>
<div class="a" style="left:27px;top:752px;width:830px;height:1px;background:#C0C0C0;"></div>
<div class="a" style="left:27px;top:769px;width:830px;height:1px;background:#C0C0C0;"></div>
<div class="a" style="left:27px;top:786px;width:830px;height:1px;background:#C0C0C0;"></div>
<div class="a" style="left:27px;top:803px;width:830px;height:1px;background:#C0C0C0;"></div>
<div class="a" style="left:27px;top:820px;width:830px;height:1px;background:#C0C0C0;"></div>
<div class="t" style="left:93px;top:55px;width:80px;height:16px;line-height:16px;font-size:14px;text-align:left;letter-spacing:-0.55px;">carr.freq</div>
<div class="t" style="left:157px;top:55px;width:80px;height:16px;line-height:16px;font-size:14px;text-align:left;letter-spacing:-0.55px;">mod.freq</div>
<div class="t" style="left:221px;top:55px;width:80px;height:16px;line-height:16px;font-size:14px;text-align:left;letter-spacing:-0.55px;">mod.depth</div>
<div class="t" style="left:7px;top:72px;width:81px;height:16px;line-height:16px;font-size:14px;text-align:right;letter-spacing:-0.75px;">256</div>
<div class="t" style="left:71px;top:72px;width:81px;height:16px;line-height:16px;font-size:14px;text-align:right;letter-spacing:-0.75px;">20</div>
<div class="t" style="left:135px;top:72px;width:81px;height:16px;line-height:16px;font-size:14px;text-align:right;letter-spacing:-0.75px;">2</div>
<div class="t" style="left:199px;top:72px;width:81px;height:16px;line-height:16px;font-size:14px;text-align:right;letter-spacing:-0.75px;">0.6</div>
<div class="t" style="left:285px;top:72px;width:80px;height:16px;line-height:16px;font-size:14px;text-align:left;letter-spacing:-0.55px;">fourier</div>
<div class="t" style="left:349px;top:72px;width:80px;height:16px;line-height:16px;font-size:14px;text-align:left;letter-spacing:-0.55px;">spectrum</div>
<div class="t" style="left:7px;top:90px;width:81px;height:16px;line-height:16px;font-size:14px;text-align:right;letter-spacing:-0.75px;">0</div>
<div class="t" style="left:71px;top:90px;width:81px;height:16px;line-height:16px;font-size:14px;text-align:right;letter-spacing:-0.75px;">0</div>
<div class="t" style="left:135px;top:90px;width:81px;height:16px;line-height:16px;font-size:14px;text-align:right;letter-spacing:-0.75px;">0</div>
<div class="t" style="left:199px;top:90px;width:81px;height:16px;line-height:16px;font-size:14px;text-align:right;letter-spacing:-0.75px;">0</div>
<div class="t" style="left:285px;top:90px;width:80px;height:16px;line-height:16px;font-size:14px;text-align:left;letter-spacing:-0.55px;">0</div>
<div class="t" style="left:327px;top:90px;width:81px;height:16px;line-height:16px;font-size:14px;text-align:right;letter-spacing:-0.75px;">0</div>
<div class="t" style="left:7px;top:107px;width:81px;height:16px;line-height:16px;font-size:14px;text-align:right;letter-spacing:-0.75px;">1</div>
<div class="t" style="left:71px;top:107px;width:81px;height:16px;line-height:16px;font-size:14px;text-align:right;letter-spacing:-0.75px;">0.471397</div>
<div class="t" style="left:135px;top:107px;width:81px;height:16px;line-height:16px;font-size:14px;text-align:right;letter-spacing:-0.75px;">0.029441</div>
<div class="t" style="left:199px;top:107px;width:81px;height:16px;line-height:16px;font-size:14px;text-align:right;letter-spacing:-0.75px;">0.485275</div>
<div class="t" style="left:285px;top:107px;width:80px;height:16px;line-height:16px;font-size:14px;text-align:left;letter-spacing:-0.55px;">0</div>
<div class="t" style="left:327px;top:107px;width:81px;height:16px;line-height:16px;font-size:14px;text-align:right;letter-spacing:-0.75px;">0</div>
<div class="t" style="left:7px;top:124px;width:81px;height:16px;line-height:16px;font-size:14px;text-align:right;letter-spacing:-0.75px;">2</div>
<div class="t" style="left:71px;top:124px;width:81px;height:16px;line-height:16px;font-size:14px;text-align:right;letter-spacing:-0.75px;">0.83147</div>
<div class="t" style="left:135px;top:124px;width:81px;height:16px;line-height:16px;font-size:14px;text-align:right;letter-spacing:-0.75px;">0.05881</div>
<div class="t" style="left:199px;top:124px;width:81px;height:16px;line-height:16px;font-size:14px;text-align:right;letter-spacing:-0.75px;">0.880369</div>
<div class="t" style="left:285px;top:124px;width:80px;height:16px;line-height:16px;font-size:14px;text-align:left;letter-spacing:-0.55px;">0</div>
<div class="t" style="left:327px;top:124px;width:81px;height:16px;line-height:16px;font-size:14px;text-align:right;letter-spacing:-0.75px;">0</div>
<div class="t" style="left:7px;top:141px;width:81px;height:16px;line-height:16px;font-size:14px;text-align:right;letter-spacing:-0.75px;">3</div>
<div class="t" style="left:71px;top:141px;width:81px;height:16px;line-height:16px;font-size:14px;text-align:right;letter-spacing:-0.75px;">0.995185</div>
<div class="t" style="left:135px;top:141px;width:81px;height:16px;line-height:16px;font-size:14px;text-align:right;letter-spacing:-0.75px;">0.088038</div>
<div class="t" style="left:199px;top:141px;width:81px;height:16px;line-height:16px;font-size:14px;text-align:right;letter-spacing:-0.75px;">1.082799</div>
<div class="t" style="left:285px;top:141px;width:80px;height:16px;line-height:16px;font-size:14px;text-align:left;letter-spacing:-0.55px;">0</div>
<div class="t" style="left:327px;top:141px;width:81px;height:16px;line-height:16px;font-size:14px;text-align:right;letter-spacing:-0.75px;">0</div>
<div class="t" style="left:7px;top:158px;width:81px;height:16px;line-height:16px;font-size:14px;text-align:right;letter-spacing:-0.75px;">4</div>
<div class="t" style="left:71px;top:158px;width:81px;height:16px;line-height:16px;font-size:14px;text-align:right;letter-spacing:-0.75px;">0.92388</div>
<div class="t" style="left:135px;top:158px;width:81px;height:16px;line-height:16px;font-size:14px;text-align:right;letter-spacing:-0.75px;">0.117054</div>
<div class="t" style="left:199px;top:158px;width:81px;height:16px;line-height:16px;font-size:14px;text-align:right;letter-spacing:-0.75px;">1.032024</div>
<div class="t" style="left:285px;top:158px;width:80px;height:16px;line-height:16px;font-size:14px;text-align:left;letter-spacing:-0.55px;">0</div>
<div class="t" style="left:327px;top:158px;width:81px;height:16px;line-height:16px;font-size:14px;text-align:right;letter-spacing:-0.75px;">0</div>
<div class="t" style="left:7px;top:175px;width:81px;height:16px;line-height:16px;font-size:14px;text-align:right;letter-spacing:-0.75px;">5</div>
<div class="t" style="left:71px;top:175px;width:81px;height:16px;line-height:16px;font-size:14px;text-align:right;letter-spacing:-0.75px;">0.634393</div>
<div class="t" style="left:135px;top:175px;width:81px;height:16px;line-height:16px;font-size:14px;text-align:right;letter-spacing:-0.75px;">0.145788</div>
<div class="t" style="left:199px;top:175px;width:81px;height:16px;line-height:16px;font-size:14px;text-align:right;letter-spacing:-0.75px;">0.72688</div>
<div class="t" style="left:285px;top:175px;width:80px;height:16px;line-height:16px;font-size:14px;text-align:left;letter-spacing:-0.55px;">0</div>
<div class="t" style="left:327px;top:175px;width:81px;height:16px;line-height:16px;font-size:14px;text-align:right;letter-spacing:-0.75px;">0</div>
<div class="t" style="left:7px;top:192px;width:81px;height:16px;line-height:16px;font-size:14px;text-align:right;letter-spacing:-0.75px;">6</div>
<div class="t" style="left:71px;top:192px;width:81px;height:16px;line-height:16px;font-size:14px;text-align:right;letter-spacing:-0.75px;">0.19509</div>
<div class="t" style="left:135px;top:192px;width:81px;height:16px;line-height:16px;font-size:14px;text-align:right;letter-spacing:-0.75px;">0.174171</div>
<div class="t" style="left:199px;top:192px;width:81px;height:16px;line-height:16px;font-size:14px;text-align:right;letter-spacing:-0.75px;">0.229069</div>
<div class="t" style="left:285px;top:192px;width:80px;height:16px;line-height:16px;font-size:14px;text-align:left;letter-spacing:-0.55px;">0</div>
<div class="t" style="left:327px;top:192px;width:81px;height:16px;line-height:16px;font-size:14px;text-align:right;letter-spacing:-0.75px;">0</div>
<div class="t" style="left:7px;top:209px;width:81px;height:16px;line-height:16px;font-size:14px;text-align:right;letter-spacing:-0.75px;">7</div>
<div class="t" style="left:71px;top:209px;width:81px;height:16px;line-height:16px;font-size:14px;text-align:right;letter-spacing:-0.75px;">-0.29028</div>
<div class="t" style="left:135px;top:209px;width:81px;height:16px;line-height:16px;font-size:14px;text-align:right;letter-spacing:-0.75px;">0.202134</div>
<div class="t" style="left:199px;top:209px;width:81px;height:16px;line-height:16px;font-size:14px;text-align:right;letter-spacing:-0.75px;">-0.34896</div>
<div class="t" style="left:285px;top:209px;width:80px;height:16px;line-height:16px;font-size:14px;text-align:left;letter-spacing:-0.55px;">0</div>
<div class="t" style="left:327px;top:209px;width:81px;height:16px;line-height:16px;font-size:14px;text-align:right;letter-spacing:-0.75px;">0</div>
<div class="t" style="left:7px;top:226px;width:81px;height:16px;line-height:16px;font-size:14px;text-align:right;letter-spacing:-0.75px;">8</div>
<div class="t" style="left:71px;top:226px;width:81px;height:16px;line-height:16px;font-size:14px;text-align:right;letter-spacing:-0.75px;">-0.70711</div>
<div class="t" style="left:135px;top:226px;width:81px;height:16px;line-height:16px;font-size:14px;text-align:right;letter-spacing:-0.75px;">0.22961</div>
<div class="t" style="left:199px;top:226px;width:81px;height:16px;line-height:16px;font-size:14px;text-align:right;letter-spacing:-0.75px;">-0.86947</div>
<div class="t" style="left:285px;top:226px;width:80px;height:16px;line-height:16px;font-size:14px;text-align:left;letter-spacing:-0.55px;">0</div>
<div class="t" style="left:327px;top:226px;width:81px;height:16px;line-height:16px;font-size:14px;text-align:right;letter-spacing:-0.75px;">0</div>
<div class="t" style="left:7px;top:243px;width:81px;height:16px;line-height:16px;font-size:14px;text-align:right;letter-spacing:-0.75px;">9</div>
<div class="t" style="left:71px;top:243px;width:81px;height:16px;line-height:16px;font-size:14px;text-align:right;letter-spacing:-0.75px;">-0.95694</div>
<div class="t" style="left:135px;top:243px;width:81px;height:16px;line-height:16px;font-size:14px;text-align:right;letter-spacing:-0.75px;">0.256533</div>
<div class="t" style="left:199px;top:243px;width:81px;height:16px;line-height:16px;font-size:14px;text-align:right;letter-spacing:-0.75px;">-1.20243</div>
<div class="t" style="left:285px;top:243px;width:80px;height:16px;line-height:16px;font-size:14px;text-align:left;letter-spacing:-0.55px;">0</div>
<div class="t" style="left:327px;top:243px;width:81px;height:16px;line-height:16px;font-size:14px;text-align:right;letter-spacing:-0.75px;">0</div>
<div class="t" style="left:7px;top:260px;width:81px;height:16px;line-height:16px;font-size:14px;text-align:right;letter-spacing:-0.75px;">10</div>
<div class="t" style="left:71px;top:260px;width:81px;height:16px;line-height:16px;font-size:14px;text-align:right;letter-spacing:-0.75px;">-0.98079</div>
<div class="t" style="left:135px;top:260px;width:81px;height:16px;line-height:16px;font-size:14px;text-align:right;letter-spacing:-0.75px;">0.282838</div>
<div class="t" style="left:199px;top:260px;width:81px;height:16px;line-height:16px;font-size:14px;text-align:right;letter-spacing:-0.75px;">-1.25819</div>
<div class="t" style="left:285px;top:260px;width:80px;height:16px;line-height:16px;font-size:14px;text-align:left;letter-spacing:-0.55px;">0</div>
<div class="t" style="left:327px;top:260px;width:81px;height:16px;line-height:16px;font-size:14px;text-align:right;letter-spacing:-0.75px;">0</div>
<div class="t" style="left:7px;top:277px;width:81px;height:16px;line-height:16px;font-size:14px;text-align:right;letter-spacing:-0.75px;">11</div>
<div class="t" style="left:71px;top:277px;width:81px;height:16px;line-height:16px;font-size:14px;text-align:right;letter-spacing:-0.75px;">-0.77301</div>
<div class="t" style="left:135px;top:277px;width:81px;height:16px;line-height:16px;font-size:14px;text-align:right;letter-spacing:-0.75px;">0.308462</div>
<div class="t" style="left:199px;top:277px;width:81px;height:16px;line-height:16px;font-size:14px;text-align:right;letter-spacing:-0.75px;">-1.01145</div>
<div class="t" style="left:285px;top:277px;width:80px;height:16px;line-height:16px;font-size:14px;text-align:left;letter-spacing:-0.55px;">0</div>
<div class="t" style="left:327px;top:277px;width:81px;height:16px;line-height:16px;font-size:14px;text-align:right;letter-spacing:-0.75px;">0</div>
<div class="t" style="left:7px;top:294px;width:81px;height:16px;line-height:16px;font-size:14px;text-align:right;letter-spacing:-0.75px;">12</div>
<div class="t" style="left:71px;top:294px;width:81px;height:16px;line-height:16px;font-size:14px;text-align:right;letter-spacing:-0.75px;">-0.38268</div>
<div class="t" style="left:135px;top:294px;width:81px;height:16px;line-height:16px;font-size:14px;text-align:right;letter-spacing:-0.75px;">0.333342</div>
<div class="t" style="left:199px;top:294px;width:81px;height:16px;line-height:16px;font-size:14px;text-align:right;letter-spacing:-0.75px;">-0.51025</div>
<div class="t" style="left:285px;top:294px;width:80px;height:16px;line-height:16px;font-size:14px;text-align:left;letter-spacing:-0.55px;">0</div>
<div class="t" style="left:327px;top:294px;width:81px;height:16px;line-height:16px;font-size:14px;text-align:right;letter-spacing:-0.75px;">0</div>
<div class="t" style="left:7px;top:311px;width:81px;height:16px;line-height:16px;font-size:14px;text-align:right;letter-spacing:-0.75px;">13</div>
<div class="t" style="left:71px;top:311px;width:81px;height:16px;line-height:16px;font-size:14px;text-align:right;letter-spacing:-0.75px;">0.098017</div>
<div class="t" style="left:135px;top:311px;width:81px;height:16px;line-height:16px;font-size:14px;text-align:right;letter-spacing:-0.75px;">0.35742</div>
<div class="t" style="left:199px;top:311px;width:81px;height:16px;line-height:16px;font-size:14px;text-align:right;letter-spacing:-0.75px;">0.13305</div>
<div class="t" style="left:285px;top:311px;width:80px;height:16px;line-height:16px;font-size:14px;text-align:left;letter-spacing:-0.55px;">0</div>
<div class="t" style="left:327px;top:311px;width:81px;height:16px;line-height:16px;font-size:14px;text-align:right;letter-spacing:-0.75px;">0</div>
<div class="t" style="left:7px;top:328px;width:81px;height:16px;line-height:16px;font-size:14px;text-align:right;letter-spacing:-0.75px;">14</div>
<div class="t" style="left:71px;top:328px;width:81px;height:16px;line-height:16px;font-size:14px;text-align:right;letter-spacing:-0.75px;">0.55557</div>
<div class="t" style="left:135px;top:328px;width:81px;height:16px;line-height:16px;font-size:14px;text-align:right;letter-spacing:-0.75px;">0.380636</div>
<div class="t" style="left:199px;top:328px;width:81px;height:16px;line-height:16px;font-size:14px;text-align:right;letter-spacing:-0.75px;">0.76704</div>
<div class="t" style="left:285px;top:328px;width:80px;height:16px;line-height:16px;font-size:14px;text-align:left;letter-spacing:-0.55px;">0</div>
<div class="t" style="left:327px;top:328px;width:81px;height:16px;line-height:16px;font-size:14px;text-align:right;letter-spacing:-0.75px;">0</div>
<div class="t" style="left:7px;top:345px;width:81px;height:16px;line-height:16px;font-size:14px;text-align:right;letter-spacing:-0.75px;">15</div>
<div class="t" style="left:71px;top:345px;width:81px;height:16px;line-height:16px;font-size:14px;text-align:right;letter-spacing:-0.75px;">0.881921</div>
<div class="t" style="left:135px;top:345px;width:81px;height:16px;line-height:16px;font-size:14px;text-align:right;letter-spacing:-0.75px;">0.402935</div>
<div class="t" style="left:199px;top:345px;width:81px;height:16px;line-height:16px;font-size:14px;text-align:right;letter-spacing:-0.75px;">1.237279</div>
<div class="t" style="left:285px;top:345px;width:80px;height:16px;line-height:16px;font-size:14px;text-align:left;letter-spacing:-0.55px;">0</div>
<div class="t" style="left:327px;top:345px;width:81px;height:16px;line-height:16px;font-size:14px;text-align:right;letter-spacing:-0.75px;">0</div>
<div class="t" style="left:7px;top:362px;width:81px;height:16px;line-height:16px;font-size:14px;text-align:right;letter-spacing:-0.75px;">16</div>
<div class="t" style="left:71px;top:362px;width:81px;height:16px;line-height:16px;font-size:14px;text-align:right;letter-spacing:-0.75px;">1</div>
<div class="t" style="left:135px;top:362px;width:81px;height:16px;line-height:16px;font-size:14px;text-align:right;letter-spacing:-0.75px;">0.424264</div>
<div class="t" style="left:199px;top:362px;width:81px;height:16px;line-height:16px;font-size:14px;text-align:right;letter-spacing:-0.75px;">1.424264</div>
<div class="t" style="left:285px;top:362px;width:80px;height:16px;line-height:16px;font-size:14px;text-align:left;letter-spacing:-0.55px;">0</div>
<div class="t" style="left:327px;top:362px;width:81px;height:16px;line-height:16px;font-size:14px;text-align:right;letter-spacing:-0.75px;">0</div>
<div class="t" style="left:7px;top:379px;width:81px;height:16px;line-height:16px;font-size:14px;text-align:right;letter-spacing:-0.75px;">17</div>
<div class="t" style="left:71px;top:379px;width:81px;height:16px;line-height:16px;font-size:14px;text-align:right;letter-spacing:-0.75px;">0.881921</div>
<div class="t" style="left:135px;top:379px;width:81px;height:16px;line-height:16px;font-size:14px;text-align:right;letter-spacing:-0.75px;">0.444571</div>
<div class="t" style="left:199px;top:379px;width:81px;height:16px;line-height:16px;font-size:14px;text-align:right;letter-spacing:-0.75px;">1.273998</div>
<div class="t" style="left:285px;top:379px;width:80px;height:16px;line-height:16px;font-size:14px;text-align:left;letter-spacing:-0.55px;">0</div>
<div class="t" style="left:327px;top:379px;width:81px;height:16px;line-height:16px;font-size:14px;text-align:right;letter-spacing:-0.75px;">0</div>
<div class="t" style="left:7px;top:396px;width:81px;height:16px;line-height:16px;font-size:14px;text-align:right;letter-spacing:-0.75px;">18</div>
<div class="t" style="left:71px;top:396px;width:81px;height:16px;line-height:16px;font-size:14px;text-align:right;letter-spacing:-0.75px;">0.55557</div>
<div class="t" style="left:135px;top:396px;width:81px;height:16px;line-height:16px;font-size:14px;text-align:right;letter-spacing:-0.75px;">0.463806</div>
<div class="t" style="left:199px;top:396px;width:81px;height:16px;line-height:16px;font-size:14px;text-align:right;letter-spacing:-0.75px;">0.813247</div>
<div class="t" style="left:285px;top:396px;width:80px;height:16px;line-height:16px;font-size:14px;text-align:left;letter-spacing:-0.55px;">38.4</div>
<div class="t" style="left:327px;top:396px;width:81px;height:16px;line-height:16px;font-size:14px;text-align:right;letter-spacing:-0.75px;">0.3</div>
<div class="t" style="left:7px;top:413px;width:81px;height:16px;line-height:16px;font-size:14px;text-align:right;letter-spacing:-0.75px;">19</div>
<div class="t" style="left:71px;top:413px;width:81px;height:16px;line-height:16px;font-size:14px;text-align:right;letter-spacing:-0.75px;">0.098017</div>
<div class="t" style="left:135px;top:413px;width:81px;height:16px;line-height:16px;font-size:14px;text-align:right;letter-spacing:-0.75px;">0.481925</div>
<div class="t" style="left:199px;top:413px;width:81px;height:16px;line-height:16px;font-size:14px;text-align:right;letter-spacing:-0.75px;">0.145254</div>
<div class="t" style="left:285px;top:413px;width:80px;height:16px;line-height:16px;font-size:14px;text-align:left;letter-spacing:-0.55px;">0</div>
<div class="t" style="left:327px;top:413px;width:81px;height:16px;line-height:16px;font-size:14px;text-align:right;letter-spacing:-0.75px;">0</div>
<div class="t" style="left:7px;top:430px;width:81px;height:16px;line-height:16px;font-size:14px;text-align:right;letter-spacing:-0.75px;">20</div>
<div class="t" style="left:71px;top:430px;width:81px;height:16px;line-height:16px;font-size:14px;text-align:right;letter-spacing:-0.75px;">-0.38268</div>
<div class="t" style="left:135px;top:430px;width:81px;height:16px;line-height:16px;font-size:14px;text-align:right;letter-spacing:-0.75px;">0.498882</div>
<div class="t" style="left:199px;top:430px;width:81px;height:16px;line-height:16px;font-size:14px;text-align:right;letter-spacing:-0.75px;">-0.5736</div>
<div class="t" style="left:285px;top:430px;width:80px;height:16px;line-height:16px;font-size:14px;text-align:left;letter-spacing:-0.55px;">-128i</div>
<div class="t" style="left:327px;top:430px;width:81px;height:16px;line-height:16px;font-size:14px;text-align:right;letter-spacing:-0.75px;">1</div>
<div class="t" style="left:7px;top:447px;width:81px;height:16px;line-height:16px;font-size:14px;text-align:right;letter-spacing:-0.75px;">21</div>
<div class="t" style="left:71px;top:447px;width:81px;height:16px;line-height:16px;font-size:14px;text-align:right;letter-spacing:-0.75px;">-0.77301</div>
<div class="t" style="left:135px;top:447px;width:81px;height:16px;line-height:16px;font-size:14px;text-align:right;letter-spacing:-0.75px;">0.514637</div>
<div class="t" style="left:199px;top:447px;width:81px;height:16px;line-height:16px;font-size:14px;text-align:right;letter-spacing:-0.75px;">-1.17083</div>
<div class="t" style="left:285px;top:447px;width:80px;height:16px;line-height:16px;font-size:14px;text-align:left;letter-spacing:-0.55px;">0</div>
<div class="t" style="left:327px;top:447px;width:81px;height:16px;line-height:16px;font-size:14px;text-align:right;letter-spacing:-0.75px;">0</div>
<div class="t" style="left:7px;top:464px;width:81px;height:16px;line-height:16px;font-size:14px;text-align:right;letter-spacing:-0.75px;">22</div>
<div class="t" style="left:71px;top:464px;width:81px;height:16px;line-height:16px;font-size:14px;text-align:right;letter-spacing:-0.75px;">-0.98079</div>
<div class="t" style="left:135px;top:464px;width:81px;height:16px;line-height:16px;font-size:14px;text-align:right;letter-spacing:-0.75px;">0.529153</div>
<div class="t" style="left:199px;top:464px;width:81px;height:16px;line-height:16px;font-size:14px;text-align:right;letter-spacing:-0.75px;">-1.49977</div>
<div class="t" style="left:285px;top:464px;width:80px;height:16px;line-height:16px;font-size:14px;text-align:left;letter-spacing:-0.55px;">-38.4</div>
<div class="t" style="left:327px;top:464px;width:81px;height:16px;line-height:16px;font-size:14px;text-align:right;letter-spacing:-0.75px;">0.3</div>
<div class="t" style="left:7px;top:481px;width:81px;height:16px;line-height:16px;font-size:14px;text-align:right;letter-spacing:-0.75px;">23</div>
<div class="t" style="left:71px;top:481px;width:81px;height:16px;line-height:16px;font-size:14px;text-align:right;letter-spacing:-0.75px;">-0.95694</div>
<div class="t" style="left:135px;top:481px;width:81px;height:16px;line-height:16px;font-size:14px;text-align:right;letter-spacing:-0.75px;">0.542394</div>
<div class="t" style="left:199px;top:481px;width:81px;height:16px;line-height:16px;font-size:14px;text-align:right;letter-spacing:-0.75px;">-1.47598</div>
<div class="t" style="left:285px;top:481px;width:80px;height:16px;line-height:16px;font-size:14px;text-align:left;letter-spacing:-0.55px;">0</div>
<div class="t" style="left:327px;top:481px;width:81px;height:16px;line-height:16px;font-size:14px;text-align:right;letter-spacing:-0.75px;">0</div>
<div class="t" style="left:7px;top:498px;width:81px;height:16px;line-height:16px;font-size:14px;text-align:right;letter-spacing:-0.75px;">24</div>
<div class="t" style="left:71px;top:498px;width:81px;height:16px;line-height:16px;font-size:14px;text-align:right;letter-spacing:-0.75px;">-0.70711</div>
<div class="t" style="left:135px;top:498px;width:81px;height:16px;line-height:16px;font-size:14px;text-align:right;letter-spacing:-0.75px;">0.554328</div>
<div class="t" style="left:199px;top:498px;width:81px;height:16px;line-height:16px;font-size:14px;text-align:right;letter-spacing:-0.75px;">-1.09908</div>
<div class="t" style="left:285px;top:498px;width:80px;height:16px;line-height:16px;font-size:14px;text-align:left;letter-spacing:-0.55px;">0</div>
<div class="t" style="left:327px;top:498px;width:81px;height:16px;line-height:16px;font-size:14px;text-align:right;letter-spacing:-0.75px;">0</div>
<div class="t" style="left:7px;top:515px;width:81px;height:16px;line-height:16px;font-size:14px;text-align:right;letter-spacing:-0.75px;">25</div>
<div class="t" style="left:71px;top:515px;width:81px;height:16px;line-height:16px;font-size:14px;text-align:right;letter-spacing:-0.75px;">-0.29028</div>
<div class="t" style="left:135px;top:515px;width:81px;height:16px;line-height:16px;font-size:14px;text-align:right;letter-spacing:-0.75px;">0.564926</div>
<div class="t" style="left:199px;top:515px;width:81px;height:16px;line-height:16px;font-size:14px;text-align:right;letter-spacing:-0.75px;">-0.45427</div>
<div class="t" style="left:285px;top:515px;width:80px;height:16px;line-height:16px;font-size:14px;text-align:left;letter-spacing:-0.55px;">0</div>
<div class="t" style="left:327px;top:515px;width:81px;height:16px;line-height:16px;font-size:14px;text-align:right;letter-spacing:-0.75px;">0</div>
<div class="t" style="left:7px;top:532px;width:81px;height:16px;line-height:16px;font-size:14px;text-align:right;letter-spacing:-0.75px;">26</div>
<div class="t" style="left:71px;top:532px;width:81px;height:16px;line-height:16px;font-size:14px;text-align:right;letter-spacing:-0.75px;">0.19509</div>
<div class="t" style="left:135px;top:532px;width:81px;height:16px;line-height:16px;font-size:14px;text-align:right;letter-spacing:-0.75px;">0.574164</div>
<div class="t" style="left:199px;top:532px;width:81px;height:16px;line-height:16px;font-size:14px;text-align:right;letter-spacing:-0.75px;">0.307104</div>
<div class="t" style="left:285px;top:532px;width:80px;height:16px;line-height:16px;font-size:14px;text-align:left;letter-spacing:-0.55px;">0</div>
<div class="t" style="left:327px;top:532px;width:81px;height:16px;line-height:16px;font-size:14px;text-align:right;letter-spacing:-0.75px;">0</div>
<div class="t" style="left:7px;top:549px;width:81px;height:16px;line-height:16px;font-size:14px;text-align:right;letter-spacing:-0.75px;">27</div>
<div class="t" style="left:71px;top:549px;width:81px;height:16px;line-height:16px;font-size:14px;text-align:right;letter-spacing:-0.75px;">0.634393</div>
<div class="t" style="left:135px;top:549px;width:81px;height:16px;line-height:16px;font-size:14px;text-align:right;letter-spacing:-0.75px;">0.582019</div>
<div class="t" style="left:199px;top:549px;width:81px;height:16px;line-height:16px;font-size:14px;text-align:right;letter-spacing:-0.75px;">1.003622</div>
<div class="t" style="left:285px;top:549px;width:80px;height:16px;line-height:16px;font-size:14px;text-align:left;letter-spacing:-0.55px;">0</div>
<div class="t" style="left:327px;top:549px;width:81px;height:16px;line-height:16px;font-size:14px;text-align:right;letter-spacing:-0.75px;">0</div>
<div class="t" style="left:7px;top:566px;width:81px;height:16px;line-height:16px;font-size:14px;text-align:right;letter-spacing:-0.75px;">28</div>
<div class="t" style="left:71px;top:566px;width:81px;height:16px;line-height:16px;font-size:14px;text-align:right;letter-spacing:-0.75px;">0.92388</div>
<div class="t" style="left:135px;top:566px;width:81px;height:16px;line-height:16px;font-size:14px;text-align:right;letter-spacing:-0.75px;">0.588471</div>
<div class="t" style="left:199px;top:566px;width:81px;height:16px;line-height:16px;font-size:14px;text-align:right;letter-spacing:-0.75px;">1.467556</div>
<div class="t" style="left:285px;top:566px;width:80px;height:16px;line-height:16px;font-size:14px;text-align:left;letter-spacing:-0.55px;">0</div>
<div class="t" style="left:327px;top:566px;width:81px;height:16px;line-height:16px;font-size:14px;text-align:right;letter-spacing:-0.75px;">0</div>
<div class="t" style="left:7px;top:583px;width:81px;height:16px;line-height:16px;font-size:14px;text-align:right;letter-spacing:-0.75px;">29</div>
<div class="t" style="left:71px;top:583px;width:81px;height:16px;line-height:16px;font-size:14px;text-align:right;letter-spacing:-0.75px;">0.995185</div>
<div class="t" style="left:135px;top:583px;width:81px;height:16px;line-height:16px;font-size:14px;text-align:right;letter-spacing:-0.75px;">0.593506</div>
<div class="t" style="left:199px;top:583px;width:81px;height:16px;line-height:16px;font-size:14px;text-align:right;letter-spacing:-0.75px;">1.585833</div>
<div class="t" style="left:285px;top:583px;width:80px;height:16px;line-height:16px;font-size:14px;text-align:left;letter-spacing:-0.55px;">0</div>
<div class="t" style="left:327px;top:583px;width:81px;height:16px;line-height:16px;font-size:14px;text-align:right;letter-spacing:-0.75px;">0</div>
<div class="t" style="left:7px;top:600px;width:81px;height:16px;line-height:16px;font-size:14px;text-align:right;letter-spacing:-0.75px;">30</div>
<div class="t" style="left:71px;top:600px;width:81px;height:16px;line-height:16px;font-size:14px;text-align:right;letter-spacing:-0.75px;">0.83147</div>
<div class="t" style="left:135px;top:600px;width:81px;height:16px;line-height:16px;font-size:14px;text-align:right;letter-spacing:-0.75px;">0.597111</div>
<div class="t" style="left:199px;top:600px;width:81px;height:16px;line-height:16px;font-size:14px;text-align:right;letter-spacing:-0.75px;">1.327949</div>
<div class="t" style="left:285px;top:600px;width:80px;height:16px;line-height:16px;font-size:14px;text-align:left;letter-spacing:-0.55px;">0</div>
<div class="t" style="left:327px;top:600px;width:81px;height:16px;line-height:16px;font-size:14px;text-align:right;letter-spacing:-0.75px;">0</div>
<div class="t" style="left:7px;top:617px;width:81px;height:16px;line-height:16px;font-size:14px;text-align:right;letter-spacing:-0.75px;">31</div>
<div class="t" style="left:71px;top:617px;width:81px;height:16px;line-height:16px;font-size:14px;text-align:right;letter-spacing:-0.75px;">0.471397</div>
<div class="t" style="left:135px;top:617px;width:81px;height:16px;line-height:16px;font-size:14px;text-align:right;letter-spacing:-0.75px;">0.599277</div>
<div class="t" style="left:199px;top:617px;width:81px;height:16px;line-height:16px;font-size:14px;text-align:right;letter-spacing:-0.75px;">0.753894</div>
<div class="t" style="left:285px;top:617px;width:80px;height:16px;line-height:16px;font-size:14px;text-align:left;letter-spacing:-0.55px;">0</div>
<div class="t" style="left:327px;top:617px;width:81px;height:16px;line-height:16px;font-size:14px;text-align:right;letter-spacing:-0.75px;">0</div>
<div class="t" style="left:7px;top:634px;width:81px;height:16px;line-height:16px;font-size:14px;text-align:right;letter-spacing:-0.75px;">32</div>
<div class="t" style="left:71px;top:634px;width:81px;height:16px;line-height:16px;font-size:14px;text-align:right;letter-spacing:-0.75px;">0</div>
<div class="t" style="left:135px;top:634px;width:81px;height:16px;line-height:16px;font-size:14px;text-align:right;letter-spacing:-0.75px;">0.6</div>
<div class="t" style="left:199px;top:634px;width:81px;height:16px;line-height:16px;font-size:14px;text-align:right;letter-spacing:-0.75px;">0</div>
<div class="t" style="left:285px;top:634px;width:80px;height:16px;line-height:16px;font-size:14px;text-align:left;letter-spacing:-0.55px;">0</div>
<div class="t" style="left:327px;top:634px;width:81px;height:16px;line-height:16px;font-size:14px;text-align:right;letter-spacing:-0.75px;">0</div>
<div class="t" style="left:7px;top:651px;width:81px;height:16px;line-height:16px;font-size:14px;text-align:right;letter-spacing:-0.75px;">33</div>
<div class="t" style="left:71px;top:651px;width:81px;height:16px;line-height:16px;font-size:14px;text-align:right;letter-spacing:-0.75px;">-0.4714</div>
<div class="t" style="left:135px;top:651px;width:81px;height:16px;line-height:16px;font-size:14px;text-align:right;letter-spacing:-0.75px;">0.599277</div>
<div class="t" style="left:199px;top:651px;width:81px;height:16px;line-height:16px;font-size:14px;text-align:right;letter-spacing:-0.75px;">-0.75389</div>
<div class="t" style="left:285px;top:651px;width:80px;height:16px;line-height:16px;font-size:14px;text-align:left;letter-spacing:-0.55px;">0</div>
<div class="t" style="left:327px;top:651px;width:81px;height:16px;line-height:16px;font-size:14px;text-align:right;letter-spacing:-0.75px;">0</div>
<div class="t" style="left:7px;top:668px;width:81px;height:16px;line-height:16px;font-size:14px;text-align:right;letter-spacing:-0.75px;">34</div>
<div class="t" style="left:71px;top:668px;width:81px;height:16px;line-height:16px;font-size:14px;text-align:right;letter-spacing:-0.75px;">-0.83147</div>
<div class="t" style="left:135px;top:668px;width:81px;height:16px;line-height:16px;font-size:14px;text-align:right;letter-spacing:-0.75px;">0.597111</div>
<div class="t" style="left:199px;top:668px;width:81px;height:16px;line-height:16px;font-size:14px;text-align:right;letter-spacing:-0.75px;">-1.32795</div>
<div class="t" style="left:285px;top:668px;width:80px;height:16px;line-height:16px;font-size:14px;text-align:left;letter-spacing:-0.55px;">0</div>
<div class="t" style="left:327px;top:668px;width:81px;height:16px;line-height:16px;font-size:14px;text-align:right;letter-spacing:-0.75px;">0</div>
<div class="t" style="left:7px;top:685px;width:81px;height:16px;line-height:16px;font-size:14px;text-align:right;letter-spacing:-0.75px;">35</div>
<div class="t" style="left:71px;top:685px;width:81px;height:16px;line-height:16px;font-size:14px;text-align:right;letter-spacing:-0.75px;">-0.99518</div>
<div class="t" style="left:135px;top:685px;width:81px;height:16px;line-height:16px;font-size:14px;text-align:right;letter-spacing:-0.75px;">0.593506</div>
<div class="t" style="left:199px;top:685px;width:81px;height:16px;line-height:16px;font-size:14px;text-align:right;letter-spacing:-0.75px;">-1.58583</div>
<div class="t" style="left:285px;top:685px;width:80px;height:16px;line-height:16px;font-size:14px;text-align:left;letter-spacing:-0.55px;">0</div>
<div class="t" style="left:327px;top:685px;width:81px;height:16px;line-height:16px;font-size:14px;text-align:right;letter-spacing:-0.75px;">0</div>
<div class="t" style="left:7px;top:702px;width:81px;height:16px;line-height:16px;font-size:14px;text-align:right;letter-spacing:-0.75px;">36</div>
<div class="t" style="left:71px;top:702px;width:81px;height:16px;line-height:16px;font-size:14px;text-align:right;letter-spacing:-0.75px;">-0.92388</div>
<div class="t" style="left:135px;top:702px;width:81px;height:16px;line-height:16px;font-size:14px;text-align:right;letter-spacing:-0.75px;">0.588471</div>
<div class="t" style="left:199px;top:702px;width:81px;height:16px;line-height:16px;font-size:14px;text-align:right;letter-spacing:-0.75px;">-1.46756</div>
<div class="t" style="left:285px;top:702px;width:80px;height:16px;line-height:16px;font-size:14px;text-align:left;letter-spacing:-0.55px;">0</div>
<div class="t" style="left:327px;top:702px;width:81px;height:16px;line-height:16px;font-size:14px;text-align:right;letter-spacing:-0.75px;">0</div>
<div class="t" style="left:7px;top:719px;width:81px;height:16px;line-height:16px;font-size:14px;text-align:right;letter-spacing:-0.75px;">37</div>
<div class="t" style="left:71px;top:719px;width:81px;height:16px;line-height:16px;font-size:14px;text-align:right;letter-spacing:-0.75px;">-0.63439</div>
<div class="t" style="left:135px;top:719px;width:81px;height:16px;line-height:16px;font-size:14px;text-align:right;letter-spacing:-0.75px;">0.582019</div>
<div class="t" style="left:199px;top:719px;width:81px;height:16px;line-height:16px;font-size:14px;text-align:right;letter-spacing:-0.75px;">-1.00362</div>
<div class="t" style="left:285px;top:719px;width:80px;height:16px;line-height:16px;font-size:14px;text-align:left;letter-spacing:-0.55px;">0</div>
<div class="t" style="left:327px;top:719px;width:81px;height:16px;line-height:16px;font-size:14px;text-align:right;letter-spacing:-0.75px;">0</div>
<div class="t" style="left:7px;top:736px;width:81px;height:16px;line-height:16px;font-size:14px;text-align:right;letter-spacing:-0.75px;">38</div>
<div class="t" style="left:71px;top:736px;width:81px;height:16px;line-height:16px;font-size:14px;text-align:right;letter-spacing:-0.75px;">-0.19509</div>
<div class="t" style="left:135px;top:736px;width:81px;height:16px;line-height:16px;font-size:14px;text-align:right;letter-spacing:-0.75px;">0.574164</div>
<div class="t" style="left:199px;top:736px;width:81px;height:16px;line-height:16px;font-size:14px;text-align:right;letter-spacing:-0.75px;">-0.3071</div>
<div class="t" style="left:285px;top:736px;width:80px;height:16px;line-height:16px;font-size:14px;text-align:left;letter-spacing:-0.55px;">0</div>
<div class="t" style="left:327px;top:736px;width:81px;height:16px;line-height:16px;font-size:14px;text-align:right;letter-spacing:-0.75px;">0</div>
<div class="t" style="left:7px;top:753px;width:81px;height:16px;line-height:16px;font-size:14px;text-align:right;letter-spacing:-0.75px;">39</div>
<div class="t" style="left:71px;top:753px;width:81px;height:16px;line-height:16px;font-size:14px;text-align:right;letter-spacing:-0.75px;">0.290285</div>
<div class="t" style="left:135px;top:753px;width:81px;height:16px;line-height:16px;font-size:14px;text-align:right;letter-spacing:-0.75px;">0.564926</div>
<div class="t" style="left:199px;top:753px;width:81px;height:16px;line-height:16px;font-size:14px;text-align:right;letter-spacing:-0.75px;">0.454274</div>
<div class="t" style="left:285px;top:753px;width:80px;height:16px;line-height:16px;font-size:14px;text-align:left;letter-spacing:-0.55px;">0</div>
<div class="t" style="left:327px;top:753px;width:81px;height:16px;line-height:16px;font-size:14px;text-align:right;letter-spacing:-0.75px;">0</div>
<div class="t" style="left:7px;top:770px;width:81px;height:16px;line-height:16px;font-size:14px;text-align:right;letter-spacing:-0.75px;">40</div>
<div class="t" style="left:71px;top:770px;width:81px;height:16px;line-height:16px;font-size:14px;text-align:right;letter-spacing:-0.75px;">0.707107</div>
<div class="t" style="left:135px;top:770px;width:81px;height:16px;line-height:16px;font-size:14px;text-align:right;letter-spacing:-0.75px;">0.554328</div>
<div class="t" style="left:199px;top:770px;width:81px;height:16px;line-height:16px;font-size:14px;text-align:right;letter-spacing:-0.75px;">1.099076</div>
<div class="t" style="left:285px;top:770px;width:80px;height:16px;line-height:16px;font-size:14px;text-align:left;letter-spacing:-0.55px;">0</div>
<div class="t" style="left:327px;top:770px;width:81px;height:16px;line-height:16px;font-size:14px;text-align:right;letter-spacing:-0.75px;">0</div>
<div class="t" style="left:7px;top:787px;width:81px;height:16px;line-height:16px;font-size:14px;text-align:right;letter-spacing:-0.75px;">41</div>
<div class="t" style="left:71px;top:787px;width:81px;height:16px;line-height:16px;font-size:14px;text-align:right;letter-spacing:-0.75px;">0.95694</div>
<div class="t" style="left:135px;top:787px;width:81px;height:16px;line-height:16px;font-size:14px;text-align:right;letter-spacing:-0.75px;">0.542394</div>
<div class="t" style="left:199px;top:787px;width:81px;height:16px;line-height:16px;font-size:14px;text-align:right;letter-spacing:-0.75px;">1.475979</div>
<div class="t" style="left:285px;top:787px;width:80px;height:16px;line-height:16px;font-size:14px;text-align:left;letter-spacing:-0.55px;">0</div>
<div class="t" style="left:327px;top:787px;width:81px;height:16px;line-height:16px;font-size:14px;text-align:right;letter-spacing:-0.75px;">0</div>
<div class="t" style="left:7px;top:804px;width:81px;height:16px;line-height:16px;font-size:14px;text-align:right;letter-spacing:-0.75px;">42</div>
<div class="t" style="left:71px;top:804px;width:81px;height:16px;line-height:16px;font-size:14px;text-align:right;letter-spacing:-0.75px;">0.980785</div>
<div class="t" style="left:135px;top:804px;width:81px;height:16px;line-height:16px;font-size:14px;text-align:right;letter-spacing:-0.75px;">0.529153</div>
<div class="t" style="left:199px;top:804px;width:81px;height:16px;line-height:16px;font-size:14px;text-align:right;letter-spacing:-0.75px;">1.499771</div>
<div class="t" style="left:285px;top:804px;width:80px;height:16px;line-height:16px;font-size:14px;text-align:left;letter-spacing:-0.55px;">0</div>
<div class="t" style="left:327px;top:804px;width:81px;height:16px;line-height:16px;font-size:14px;text-align:right;letter-spacing:-0.75px;">0</div>
<div class="t" style="left:7px;top:821px;width:81px;height:16px;line-height:16px;font-size:14px;text-align:right;letter-spacing:-0.75px;">43</div>
<div class="t" style="left:71px;top:821px;width:81px;height:16px;line-height:16px;font-size:14px;text-align:right;letter-spacing:-0.75px;">0.77301</div>
<div class="t" style="left:135px;top:821px;width:81px;height:16px;line-height:16px;font-size:14px;text-align:right;letter-spacing:-0.75px;">0.514637</div>
<div class="t" style="left:199px;top:821px;width:81px;height:16px;line-height:16px;font-size:14px;text-align:right;letter-spacing:-0.75px;">1.17083</div>
<div class="t" style="left:285px;top:821px;width:80px;height:16px;line-height:16px;font-size:14px;text-align:left;letter-spacing:-0.55px;">0</div>
<div class="t" style="left:327px;top:821px;width:81px;height:16px;line-height:16px;font-size:14px;text-align:right;letter-spacing:-0.75px;">0</div>
<div class="a" style="left:283px;top:90px;width:0;height:0;border-top:5px solid #008000;border-right:5px solid transparent"></div>
<div class="a" style="left:283px;top:107px;width:0;height:0;border-top:5px solid #008000;border-right:5px solid transparent"></div>
<div class="a" style="left:283px;top:124px;width:0;height:0;border-top:5px solid #008000;border-right:5px solid transparent"></div>
<div class="a" style="left:283px;top:141px;width:0;height:0;border-top:5px solid #008000;border-right:5px solid transparent"></div>
<div class="a" style="left:283px;top:158px;width:0;height:0;border-top:5px solid #008000;border-right:5px solid transparent"></div>
<div class="a" style="left:283px;top:175px;width:0;height:0;border-top:5px solid #008000;border-right:5px solid transparent"></div>
<div class="a" style="left:283px;top:192px;width:0;height:0;border-top:5px solid #008000;border-right:5px solid transparent"></div>
<div class="a" style="left:283px;top:209px;width:0;height:0;border-top:5px solid #008000;border-right:5px solid transparent"></div>
<div class="a" style="left:283px;top:226px;width:0;height:0;border-top:5px solid #008000;border-right:5px solid transparent"></div>
<div class="a" style="left:283px;top:243px;width:0;height:0;border-top:5px solid #008000;border-right:5px solid transparent"></div>
<div class="a" style="left:283px;top:260px;width:0;height:0;border-top:5px solid #008000;border-right:5px solid transparent"></div>
<div class="a" style="left:283px;top:277px;width:0;height:0;border-top:5px solid #008000;border-right:5px solid transparent"></div>
<div class="a" style="left:283px;top:294px;width:0;height:0;border-top:5px solid #008000;border-right:5px solid transparent"></div>
<div class="a" style="left:283px;top:311px;width:0;height:0;border-top:5px solid #008000;border-right:5px solid transparent"></div>
<div class="a" style="left:283px;top:328px;width:0;height:0;border-top:5px solid #008000;border-right:5px solid transparent"></div>
<div class="a" style="left:283px;top:345px;width:0;height:0;border-top:5px solid #008000;border-right:5px solid transparent"></div>
<div class="a" style="left:283px;top:362px;width:0;height:0;border-top:5px solid #008000;border-right:5px solid transparent"></div>
<div class="a" style="left:283px;top:379px;width:0;height:0;border-top:5px solid #008000;border-right:5px solid transparent"></div>
<div class="a" style="left:283px;top:396px;width:0;height:0;border-top:5px solid #008000;border-right:5px solid transparent"></div>
<div class="a" style="left:283px;top:413px;width:0;height:0;border-top:5px solid #008000;border-right:5px solid transparent"></div>
<div class="a" style="left:283px;top:447px;width:0;height:0;border-top:5px solid #008000;border-right:5px solid transparent"></div>
<div class="a" style="left:283px;top:464px;width:0;height:0;border-top:5px solid #008000;border-right:5px solid transparent"></div>
<div class="a" style="left:283px;top:481px;width:0;height:0;border-top:5px solid #008000;border-right:5px solid transparent"></div>
<div class="a" style="left:283px;top:498px;width:0;height:0;border-top:5px solid #008000;border-right:5px solid transparent"></div>
<div class="a" style="left:283px;top:515px;width:0;height:0;border-top:5px solid #008000;border-right:5px solid transparent"></div>
<div class="a" style="left:283px;top:532px;width:0;height:0;border-top:5px solid #008000;border-right:5px solid transparent"></div>
<div class="a" style="left:283px;top:549px;width:0;height:0;border-top:5px solid #008000;border-right:5px solid transparent"></div>
<div class="a" style="left:283px;top:566px;width:0;height:0;border-top:5px solid #008000;border-right:5px solid transparent"></div>
<div class="a" style="left:283px;top:583px;width:0;height:0;border-top:5px solid #008000;border-right:5px solid transparent"></div>
<div class="a" style="left:283px;top:600px;width:0;height:0;border-top:5px solid #008000;border-right:5px solid transparent"></div>
<div class="a" style="left:283px;top:617px;width:0;height:0;border-top:5px solid #008000;border-right:5px solid transparent"></div>
<div class="a" style="left:283px;top:634px;width:0;height:0;border-top:5px solid #008000;border-right:5px solid transparent"></div>
<div class="a" style="left:283px;top:651px;width:0;height:0;border-top:5px solid #008000;border-right:5px solid transparent"></div>
<div class="a" style="left:283px;top:668px;width:0;height:0;border-top:5px solid #008000;border-right:5px solid transparent"></div>
<div class="a" style="left:283px;top:685px;width:0;height:0;border-top:5px solid #008000;border-right:5px solid transparent"></div>
<div class="a" style="left:283px;top:702px;width:0;height:0;border-top:5px solid #008000;border-right:5px solid transparent"></div>
<div class="a" style="left:283px;top:719px;width:0;height:0;border-top:5px solid #008000;border-right:5px solid transparent"></div>
<div class="a" style="left:283px;top:736px;width:0;height:0;border-top:5px solid #008000;border-right:5px solid transparent"></div>
<div class="a" style="left:283px;top:753px;width:0;height:0;border-top:5px solid #008000;border-right:5px solid transparent"></div>
<div class="a" style="left:283px;top:770px;width:0;height:0;border-top:5px solid #008000;border-right:5px solid transparent"></div>
<div class="a" style="left:283px;top:787px;width:0;height:0;border-top:5px solid #008000;border-right:5px solid transparent"></div>
<div class="a" style="left:283px;top:804px;width:0;height:0;border-top:5px solid #008000;border-right:5px solid transparent"></div>
<div class="a" style="left:283px;top:821px;width:0;height:0;border-top:5px solid #008000;border-right:5px solid transparent"></div>
<div class="a" style="left:89px;top:55px;width:2px;height:35px;background:#000;"></div>
<div class="a" style="left:281px;top:55px;width:2px;height:35px;background:#000;"></div>
<div class="a" style="left:89px;top:88px;width:194px;height:2px;background:#000;"></div>
<div class="a" style="left:601px;top:55px;width:3px;height:18px;background:#000;"></div>
<div class="a" style="left:665px;top:55px;width:3px;height:13px;background:#000;"></div>
<div class="a" style="left:601px;top:55px;width:67px;height:1px;background:#000;"></div>
<div class="a" style="left:601px;top:70px;width:62px;height:3px;background:#000;"></div>
<div class="a" style="left:664px;top:69px;width:5px;height:5px;background:#000;"></div>
<div class="a" style="left:602px;top:56px;width:1px;height:16px;background:#3A3A3A;"></div>
<div class="a" style="left:602px;top:71px;width:60px;height:1px;background:#3A3A3A;"></div>
<div class="a" style="left:666px;top:56px;width:1px;height:11px;background:#3A3A3A;"></div>
<div class="a" style="left:666px;top:70px;width:1px;height:3px;background:#3A3A3A;"></div>
<div class="a" style="left:665px;top:71px;width:3px;height:1px;background:#3A3A3A;"></div>
<svg class="a" style="left:455px;top:109px" width="402" height="215" viewBox="455 109 402 215"><rect x="455.5" y="109.5" width="412" height="214" fill="#fff" stroke="#000" stroke-width="1"/><rect x="488" y="131" width="379" height="172" fill="#C0C0C0"/><rect x="488" y="131" width="379" height="1" fill="#808080"/><rect x="488" y="302" width="379" height="1" fill="#808080"/><rect x="486" y="131" width="2" height="1" fill="#000"/><text x="484" y="134" text-anchor="end" class="cl">1.5</text><rect x="488" y="160" width="379" height="1" fill="#000"/><rect x="486" y="160" width="2" height="1" fill="#000"/><text x="484" y="163" text-anchor="end" class="cl">1</text><rect x="488" y="188" width="379" height="1" fill="#000"/><rect x="486" y="188" width="2" height="1" fill="#000"/><text x="484" y="191" text-anchor="end" class="cl">0.5</text><rect x="488" y="217" width="379" height="1" fill="#000"/><rect x="486" y="217" width="2" height="1" fill="#000"/><text x="484" y="220" text-anchor="end" class="cl">0</text><rect x="488" y="245" width="379" height="1" fill="#000"/><rect x="486" y="245" width="2" height="1" fill="#000"/><text x="484" y="248" text-anchor="end" class="cl">-0.5</text><rect x="488" y="274" width="379" height="1" fill="#000"/><rect x="486" y="274" width="2" height="1" fill="#000"/><text x="484" y="277" text-anchor="end" class="cl">-1</text><rect x="486" y="302" width="2" height="1" fill="#000"/><text x="484" y="305" text-anchor="end" class="cl">-1.5</text><rect x="489" y="217" width="1" height="3" fill="#000"/><text x="488.5" y="231" text-anchor="middle" class="cl">0</text><rect x="559" y="217" width="1" height="3" fill="#000"/><text x="559.5" y="231" text-anchor="middle" class="cl">50</text><rect x="630" y="217" width="1" height="3" fill="#000"/><text x="630.0" y="231" text-anchor="middle" class="cl">100</text><rect x="700" y="217" width="1" height="3" fill="#000"/><text x="700.5" y="231" text-anchor="middle" class="cl">150</text><rect x="771" y="217" width="1" height="3" fill="#000"/><text x="771.0" y="231" text-anchor="middle" class="cl">200</text><rect x="841" y="217" width="1" height="3" fill="#000"/><text x="841.5" y="231" text-anchor="middle" class="cl">250</text><rect x="488" y="131" width="1" height="172" fill="#000"/><polyline points="489.00,217.50 490.41,190.63 491.82,170.11 493.23,160.77 494.64,164.84 496.05,181.34 497.46,206.38 498.87,234.05 500.28,257.81 501.69,272.05 503.10,273.40 504.51,261.56 505.92,239.31 507.33,211.91 508.74,185.83 510.15,167.23 511.56,160.50 512.97,167.23 514.38,185.83 515.79,211.91 517.20,239.31 518.61,261.56 520.02,273.40 521.43,272.05 522.84,257.81 524.25,234.05 525.66,206.38 527.07,181.34 528.48,164.84 529.89,160.77 531.30,170.11 532.71,190.63 534.12,217.50 535.53,244.37 536.94,264.89 538.35,274.23 539.76,270.16 541.17,253.66 542.58,228.62 543.99,200.95 545.40,177.19 546.81,162.95 548.22,161.60 549.63,173.44 551.04,195.69 552.45,223.09 553.86,249.17 555.27,267.77 556.68,274.50 558.09,267.77 559.50,249.17 560.91,223.09 562.32,195.69 563.73,173.44 565.14,161.60 566.55,162.95 567.96,177.19 569.37,200.95 570.78,228.62 572.19,253.66 573.60,270.16 575.01,274.23 576.42,264.89 577.83,244.37 579.24,217.50 580.65,190.63 582.06,170.11 583.47,160.77 584.88,164.84 586.29,181.34 587.70,206.38 589.11,234.05 590.52,257.81 591.93,272.05 593.34,273.40 594.75,261.56 596.16,239.31 597.57,211.91 598.98,185.83 600.39,167.23 601.80,160.50 603.21,167.23 604.62,185.83 606.03,211.91 607.44,239.31 608.85,261.56 610.26,273.40 611.67,272.05 613.08,257.81 614.49,234.05 615.90,206.38 617.31,181.34 618.72,164.84 620.13,160.77 621.54,170.11 622.95,190.63 624.36,217.50 625.77,244.37 627.18,264.89 628.59,274.23 630.00,270.16 631.41,253.66 632.82,228.62 634.23,200.95 635.64,177.19 637.05,162.95 638.46,161.60 639.87,173.44 641.28,195.69 642.69,223.09 644.10,249.17 645.51,267.77 646.92,274.50 648.33,267.77 649.74,249.17 651.15,223.09 652.56,195.69 653.97,173.44 655.38,161.60 656.79,162.95 658.20,177.19 659.61,200.95 661.02,228.62 662.43,253.66 663.84,270.16 665.25,274.23 666.66,264.89 668.07,244.37 669.48,217.50 670.89,190.63 672.30,170.11 673.71,160.77 675.12,164.84 676.53,181.34 677.94,206.38 679.35,234.05 680.76,257.81 682.17,272.05 683.58,273.40 684.99,261.56 686.40,239.31 687.81,211.91 689.22,185.83 690.63,167.23 692.04,160.50 693.45,167.23 694.86,185.83 696.27,211.91 697.68,239.31 699.09,261.56 700.50,273.40 701.91,272.05 703.32,257.81 704.73,234.05 706.14,206.38 707.55,181.34 708.96,164.84 710.37,160.77 711.78,170.11 713.19,190.63 714.60,217.50 716.01,244.37 717.42,264.89 718.83,274.23 720.24,270.16 721.65,253.66 723.06,228.62 724.47,200.95 725.88,177.19 727.29,162.95 728.70,161.60 730.11,173.44 731.52,195.69 732.93,223.09 734.34,249.17 735.75,267.77 737.16,274.50 738.57,267.77 739.98,249.17 741.39,223.09 742.80,195.69 744.21,173.44 745.62,161.60 747.03,162.95 748.44,177.19 749.85,200.95 751.26,228.62 752.67,253.66 754.08,270.16 755.49,274.23 756.90,264.89 758.31,244.37 759.72,217.50 761.13,190.63 762.54,170.11 763.95,160.77 765.36,164.84 766.77,181.34 768.18,206.38 769.59,234.05 771.00,257.81 772.41,272.05 773.82,273.40 775.23,261.56 776.64,239.31 778.05,211.91 779.46,185.83 780.87,167.23 782.28,160.50 783.69,167.23 785.10,185.83 786.51,211.91 787.92,239.31 789.33,261.56 790.74,273.40 792.15,272.05 793.56,257.81 794.97,234.05 796.38,206.38 797.79,181.34 799.20,164.84 800.61,160.77 802.02,170.11 803.43,190.63 804.84,217.50 806.25,244.37 807.66,264.89 809.07,274.23 810.48,270.16 811.89,253.66 813.30,228.62 814.71,200.95 816.12,177.19 817.53,162.95 818.94,161.60 820.35,173.44 821.76,195.69 823.17,223.09 824.58,249.17 825.99,267.77 827.40,274.50 828.81,267.77 830.22,249.17 831.63,223.09 833.04,195.69 834.45,173.44 835.86,161.60 837.27,162.95 838.68,177.19 840.09,200.95 841.50,228.62 842.91,253.66 844.32,270.16 845.73,274.23 847.14,264.89 848.55,244.37" fill="none" stroke="#000080" stroke-width="1" shape-rendering="crispEdges"/></svg>
<svg class="a" style="left:454px;top:330px" width="403" height="215" viewBox="454 330 403 215"><rect x="454.5" y="330.5" width="413" height="214" fill="#fff" stroke="#000" stroke-width="1"/><rect x="488" y="352" width="379" height="172" fill="#C0C0C0"/><rect x="488" y="352" width="379" height="1" fill="#808080"/><rect x="488" y="523" width="379" height="1" fill="#808080"/><rect x="486" y="352" width="2" height="1" fill="#000"/><text x="484" y="355" text-anchor="end" class="cl">0.8</text><rect x="488" y="373" width="379" height="1" fill="#000"/><rect x="486" y="373" width="2" height="1" fill="#000"/><text x="484" y="376" text-anchor="end" class="cl">0.6</text><rect x="488" y="395" width="379" height="1" fill="#000"/><rect x="486" y="395" width="2" height="1" fill="#000"/><text x="484" y="398" text-anchor="end" class="cl">0.4</text><rect x="488" y="416" width="379" height="1" fill="#000"/><rect x="486" y="416" width="2" height="1" fill="#000"/><text x="484" y="419" text-anchor="end" class="cl">0.2</text><rect x="488" y="438" width="379" height="1" fill="#000"/><rect x="486" y="438" width="2" height="1" fill="#000"/><text x="484" y="441" text-anchor="end" class="cl">0</text><rect x="488" y="459" width="379" height="1" fill="#000"/><rect x="486" y="459" width="2" height="1" fill="#000"/><text x="484" y="462" text-anchor="end" class="cl">-0.2</text><rect x="488" y="480" width="379" height="1" fill="#000"/><rect x="486" y="480" width="2" height="1" fill="#000"/><text x="484" y="483" text-anchor="end" class="cl">-0.4</text><rect x="488" y="502" width="379" height="1" fill="#000"/><rect x="486" y="502" width="2" height="1" fill="#000"/><text x="484" y="505" text-anchor="end" class="cl">-0.6</text><rect x="486" y="523" width="2" height="1" fill="#000"/><text x="484" y="526" text-anchor="end" class="cl">-0.8</text><rect x="488" y="438" width="1" height="3" fill="#000"/><text x="488.5" y="452" text-anchor="middle" class="cl">0</text><rect x="558" y="438" width="1" height="3" fill="#000"/><text x="558.5" y="452" text-anchor="middle" class="cl">50</text><rect x="629" y="438" width="1" height="3" fill="#000"/><text x="629.0" y="452" text-anchor="middle" class="cl">100</text><rect x="699" y="438" width="1" height="3" fill="#000"/><text x="699.5" y="452" text-anchor="middle" class="cl">150</text><rect x="770" y="438" width="1" height="3" fill="#000"/><text x="770.0" y="452" text-anchor="middle" class="cl">200</text><rect x="840" y="438" width="1" height="3" fill="#000"/><text x="840.5" y="452" text-anchor="middle" class="cl">250</text><rect x="488" y="352" width="1" height="172" fill="#000"/><polyline points="488.00,438.50 489.41,435.35 490.82,432.21 492.23,429.09 493.64,425.99 495.05,422.92 496.46,419.89 497.87,416.90 499.28,413.96 500.69,411.08 502.10,408.27 503.51,405.53 504.92,402.87 506.33,400.30 507.74,397.82 509.15,395.44 510.56,393.16 511.97,390.99 513.38,388.93 514.79,386.99 516.20,385.18 517.61,383.50 519.02,381.95 520.43,380.53 521.84,379.26 523.25,378.12 524.66,377.14 526.07,376.30 527.48,375.61 528.89,375.07 530.30,374.68 531.71,374.45 533.12,374.38 534.53,374.45 535.94,374.68 537.35,375.07 538.76,375.61 540.17,376.30 541.58,377.14 542.99,378.12 544.40,379.26 545.81,380.53 547.22,381.95 548.63,383.50 550.04,385.18 551.45,386.99 552.86,388.93 554.27,390.99 555.68,393.16 557.09,395.44 558.50,397.82 559.91,400.30 561.32,402.87 562.73,405.53 564.14,408.27 565.55,411.08 566.96,413.96 568.37,416.90 569.78,419.89 571.19,422.92 572.60,425.99 574.01,429.09 575.42,432.21 576.83,435.35 578.24,438.50 579.65,441.65 581.06,444.79 582.47,447.91 583.88,451.01 585.29,454.08 586.70,457.11 588.11,460.10 589.52,463.04 590.93,465.92 592.34,468.73 593.75,471.47 595.16,474.13 596.57,476.70 597.98,479.18 599.39,481.56 600.80,483.84 602.21,486.01 603.62,488.07 605.03,490.01 606.44,491.82 607.85,493.50 609.26,495.05 610.67,496.47 612.08,497.74 613.49,498.88 614.90,499.86 616.31,500.70 617.72,501.39 619.13,501.93 620.54,502.32 621.95,502.55 623.36,502.62 624.77,502.55 626.18,502.32 627.59,501.93 629.00,501.39 630.41,500.70 631.82,499.86 633.23,498.88 634.64,497.74 636.05,496.47 637.46,495.05 638.87,493.50 640.28,491.82 641.69,490.01 643.10,488.07 644.51,486.01 645.92,483.84 647.33,481.56 648.74,479.18 650.15,476.70 651.56,474.13 652.97,471.47 654.38,468.73 655.79,465.92 657.20,463.04 658.61,460.10 660.02,457.11 661.43,454.08 662.84,451.01 664.25,447.91 665.66,444.79 667.07,441.65 668.48,438.50 669.89,435.35 671.30,432.21 672.71,429.09 674.12,425.99 675.53,422.92 676.94,419.89 678.35,416.90 679.76,413.96 681.17,411.08 682.58,408.27 683.99,405.53 685.40,402.87 686.81,400.30 688.22,397.82 689.63,395.44 691.04,393.16 692.45,390.99 693.86,388.93 695.27,386.99 696.68,385.18 698.09,383.50 699.50,381.95 700.91,380.53 702.32,379.26 703.73,378.12 705.14,377.14 706.55,376.30 707.96,375.61 709.37,375.07 710.78,374.68 712.19,374.45 713.60,374.38 715.01,374.45 716.42,374.68 717.83,375.07 719.24,375.61 720.65,376.30 722.06,377.14 723.47,378.12 724.88,379.26 726.29,380.53 727.70,381.95 729.11,383.50 730.52,385.18 731.93,386.99 733.34,388.93 734.75,390.99 736.16,393.16 737.57,395.44 738.98,397.82 740.39,400.30 741.80,402.87 743.21,405.53 744.62,408.27 746.03,411.08 747.44,413.96 748.85,416.90 750.26,419.89 751.67,422.92 753.08,425.99 754.49,429.09 755.90,432.21 757.31,435.35 758.72,438.50 760.13,441.65 761.54,444.79 762.95,447.91 764.36,451.01 765.77,454.08 767.18,457.11 768.59,460.10 770.00,463.04 771.41,465.92 772.82,468.73 774.23,471.47 775.64,474.13 777.05,476.70 778.46,479.18 779.87,481.56 781.28,483.84 782.69,486.01 784.10,488.07 785.51,490.01 786.92,491.82 788.33,493.50 789.74,495.05 791.15,496.47 792.56,497.74 793.97,498.88 795.38,499.86 796.79,500.70 798.20,501.39 799.61,501.93 801.02,502.32 802.43,502.55 803.84,502.62 805.25,502.55 806.66,502.32 808.07,501.93 809.48,501.39 810.89,500.70 812.30,499.86 813.71,498.88 815.12,497.74 816.53,496.47 817.94,495.05 819.35,493.50 820.76,491.82 822.17,490.01 823.58,488.07 824.99,486.01 826.40,483.84 827.81,481.56 829.22,479.18 830.63,476.70 832.04,474.13 833.45,471.47 834.86,468.73 836.27,465.92 837.68,463.04 839.09,460.10 840.50,457.11 841.91,454.08 843.32,451.01 844.73,447.91 846.14,444.79 847.55,441.65" fill="none" stroke="#000080" stroke-width="1" shape-rendering="crispEdges"/></svg>
<svg class="a" style="left:456px;top:551px" width="401" height="215" viewBox="456 551 401 215"><rect x="456.5" y="551.5" width="411" height="214" fill="#fff" stroke="#000" stroke-width="1"/><rect x="489" y="573" width="378" height="172" fill="#C0C0C0"/><rect x="489" y="573" width="378" height="1" fill="#808080"/><rect x="489" y="744" width="378" height="1" fill="#808080"/><rect x="487" y="573" width="2" height="1" fill="#000"/><text x="485" y="576" text-anchor="end" class="cl">2</text><rect x="489" y="594" width="378" height="1" fill="#000"/><rect x="487" y="594" width="2" height="1" fill="#000"/><text x="485" y="597" text-anchor="end" class="cl">1.5</text><rect x="489" y="616" width="378" height="1" fill="#000"/><rect x="487" y="616" width="2" height="1" fill="#000"/><text x="485" y="619" text-anchor="end" class="cl">1</text><rect x="489" y="637" width="378" height="1" fill="#000"/><rect x="487" y="637" width="2" height="1" fill="#000"/><text x="485" y="640" text-anchor="end" class="cl">0.5</text><rect x="489" y="659" width="378" height="1" fill="#000"/><rect x="487" y="659" width="2" height="1" fill="#000"/><text x="485" y="662" text-anchor="end" class="cl">0</text><rect x="489" y="680" width="378" height="1" fill="#000"/><rect x="487" y="680" width="2" height="1" fill="#000"/><text x="485" y="683" text-anchor="end" class="cl">-0.5</text><rect x="489" y="701" width="378" height="1" fill="#000"/><rect x="487" y="701" width="2" height="1" fill="#000"/><text x="485" y="704" text-anchor="end" class="cl">-1</text><rect x="489" y="723" width="378" height="1" fill="#000"/><rect x="487" y="723" width="2" height="1" fill="#000"/><text x="485" y="726" text-anchor="end" class="cl">-1.5</text><rect x="487" y="744" width="2" height="1" fill="#000"/><text x="485" y="747" text-anchor="end" class="cl">-2</text><rect x="490" y="659" width="1" height="3" fill="#000"/><text x="489.5" y="673" text-anchor="middle" class="cl">0</text><rect x="560" y="659" width="1" height="3" fill="#000"/><text x="560.5" y="673" text-anchor="middle" class="cl">50</text><rect x="631" y="659" width="1" height="3" fill="#000"/><text x="631.0" y="673" text-anchor="middle" class="cl">100</text><rect x="701" y="659" width="1" height="3" fill="#000"/><text x="701.5" y="673" text-anchor="middle" class="cl">150</text><rect x="772" y="659" width="1" height="3" fill="#000"/><text x="772.0" y="673" text-anchor="middle" class="cl">200</text><rect x="842" y="659" width="1" height="3" fill="#000"/><text x="842.5" y="673" text-anchor="middle" class="cl">250</text><rect x="489" y="573" width="1" height="172" fill="#000"/><polyline points="490.00,659.50 491.41,638.75 492.82,621.86 494.23,613.21 495.64,615.38 497.05,628.43 498.46,649.71 499.87,674.42 501.28,696.67 502.69,710.90 504.10,713.29 505.51,702.74 506.92,681.31 508.33,653.81 509.74,626.71 511.15,606.61 512.56,598.61 513.97,605.04 515.38,624.73 516.79,653.29 518.20,684.02 519.61,709.55 521.02,723.62 522.43,722.60 523.84,706.49 525.25,678.92 526.66,646.37 528.07,616.60 529.48,596.76 530.89,591.71 532.30,602.73 533.71,627.27 535.12,659.50 536.53,691.73 537.94,716.27 539.35,727.29 540.76,722.24 542.17,702.40 543.58,672.63 544.99,640.08 546.40,612.51 547.81,596.40 549.22,595.38 550.63,609.45 552.04,634.98 553.45,665.71 554.86,694.27 556.27,713.96 557.68,720.39 559.09,712.39 560.50,692.29 561.91,665.19 563.32,637.69 564.73,616.26 566.14,605.71 567.55,608.10 568.96,622.33 570.37,644.58 571.78,669.29 573.19,690.57 574.60,703.62 576.01,705.79 577.42,697.14 578.83,680.25 580.24,659.50 581.65,639.94 583.06,626.05 584.47,620.70 585.88,624.63 587.29,636.33 588.70,652.61 590.11,669.40 591.52,682.79 592.93,689.91 594.34,689.57 595.75,682.35 597.16,670.41 598.57,656.81 599.98,644.79 601.39,636.99 602.80,634.89 604.21,638.56 605.62,646.77 607.03,657.33 608.44,667.70 609.85,675.54 611.26,679.24 612.67,678.22 614.08,672.97 615.49,664.90 616.90,655.95 618.31,648.16 619.72,643.25 621.13,642.21 622.54,645.18 623.95,651.42 625.36,659.50 626.77,667.58 628.18,673.82 629.59,676.79 631.00,675.75 632.41,670.84 633.82,663.05 635.23,654.10 636.64,646.03 638.05,640.78 639.46,639.76 640.87,643.46 642.28,651.30 643.69,661.67 645.10,672.23 646.51,680.44 647.92,684.11 649.33,682.01 650.74,674.21 652.15,662.19 653.56,648.59 654.97,636.65 656.38,629.43 657.79,629.09 659.20,636.21 660.61,649.60 662.02,666.39 663.43,682.67 664.84,694.37 666.25,698.30 667.66,692.95 669.07,679.06 670.48,659.50 671.89,638.75 673.30,621.86 674.71,613.21 676.12,615.38 677.53,628.43 678.94,649.71 680.35,674.42 681.76,696.67 683.17,710.90 684.58,713.29 685.99,702.74 687.40,681.31 688.81,653.81 690.22,626.71 691.63,606.61 693.04,598.61 694.45,605.04 695.86,624.73 697.27,653.29 698.68,684.02 700.09,709.55 701.50,723.62 702.91,722.60 704.32,706.49 705.73,678.92 707.14,646.37 708.55,616.60 709.96,596.76 711.37,591.71 712.78,602.73 714.19,627.27 715.60,659.50 717.01,691.73 718.42,716.27 719.83,727.29 721.24,722.24 722.65,702.40 724.06,672.63 725.47,640.08 726.88,612.51 728.29,596.40 729.70,595.38 731.11,609.45 732.52,634.98 733.93,665.71 735.34,694.27 736.75,713.96 738.16,720.39 739.57,712.39 740.98,692.29 742.39,665.19 743.80,637.69 745.21,616.26 746.62,605.71 748.03,608.10 749.44,622.33 750.85,644.58 752.26,669.29 753.67,690.57 755.08,703.62 756.49,705.79 757.90,697.14 759.31,680.25 760.72,659.50 762.13,639.94 763.54,626.05 764.95,620.70 766.36,624.63 767.77,636.33 769.18,652.61 770.59,669.40 772.00,682.79 773.41,689.91 774.82,689.57 776.23,682.35 777.64,670.41 779.05,656.81 780.46,644.79 781.87,636.99 783.28,634.89 784.69,638.56 786.10,646.77 787.51,657.33 788.92,667.70 790.33,675.54 791.74,679.24 793.15,678.22 794.56,672.97 795.97,664.90 797.38,655.95 798.79,648.16 800.20,643.25 801.61,642.21 803.02,645.18 804.43,651.42 805.84,659.50 807.25,667.58 808.66,673.82 810.07,676.79 811.48,675.75 812.89,670.84 814.30,663.05 815.71,654.10 817.12,646.03 818.53,640.78 819.94,639.76 821.35,643.46 822.76,651.30 824.17,661.67 825.58,672.23 826.99,680.44 828.40,684.11 829.81,682.01 831.22,674.21 832.63,662.19 834.04,648.59 835.45,636.65 836.86,629.43 838.27,629.09 839.68,636.21 841.09,649.60 842.50,666.39 843.91,682.67 845.32,694.37 846.73,698.30 848.14,692.95 849.55,679.06" fill="none" stroke="#000080" stroke-width="1" shape-rendering="crispEdges"/></svg>
<svg class="a" style="left:72px;top:499px" width="365" height="330" viewBox="72 499 365 330"><rect x="72.5" y="499.5" width="364" height="329" fill="#fff" stroke="#000"/><rect x="107" y="521" width="309" height="274" fill="#C0C0C0"/><rect x="107" y="521" width="309" height="1" fill="#808080"/><rect x="415" y="521" width="1" height="274" fill="#808080"/><rect x="105" y="795" width="2" height="1" fill="#000"/><text x="102.5" y="798" text-anchor="end" class="bl">0</text><rect x="107" y="749" width="308" height="1" fill="#000"/><rect x="105" y="749" width="2" height="1" fill="#000"/><text x="102.5" y="752" text-anchor="end" class="bl">0.2</text><rect x="107" y="704" width="308" height="1" fill="#000"/><rect x="105" y="704" width="2" height="1" fill="#000"/><text x="102.5" y="707" text-anchor="end" class="bl">0.4</text><rect x="107" y="658" width="308" height="1" fill="#000"/><rect x="105" y="658" width="2" height="1" fill="#000"/><text x="102.5" y="661" text-anchor="end" class="bl">0.6</text><rect x="107" y="612" width="308" height="1" fill="#000"/><rect x="105" y="612" width="2" height="1" fill="#000"/><text x="102.5" y="615" text-anchor="end" class="bl">0.8</text><rect x="107" y="567" width="308" height="1" fill="#000"/><rect x="105" y="567" width="2" height="1" fill="#000"/><text x="102.5" y="570" text-anchor="end" class="bl">1</text><rect x="105" y="521" width="2" height="1" fill="#000"/><text x="102.5" y="524" text-anchor="end" class="bl">1.2</text><rect x="245.5" y="727.5" width="2" height="68" fill="#9999FF" stroke="#000" stroke-width="1"/><rect x="260.5" y="567.5" width="3" height="228" fill="#9999FF" stroke="#000" stroke-width="1"/><rect x="275.5" y="727.5" width="3" height="68" fill="#9999FF" stroke="#000" stroke-width="1"/><rect x="107" y="521" width="1" height="275" fill="#000"/><rect x="107" y="795" width="309" height="1" fill="#000"/><rect x="107" y="795" width="1" height="3" fill="#000"/><text x="107.5" y="809" text-anchor="middle" class="bl">0</text><rect x="115" y="795" width="1" height="3" fill="#000"/><rect x="122" y="795" width="1" height="3" fill="#000"/><text x="122.9" y="809" text-anchor="middle" class="bl">2</text><rect x="130" y="795" width="1" height="3" fill="#000"/><rect x="138" y="795" width="1" height="3" fill="#000"/><text x="138.3" y="809" text-anchor="middle" class="bl">4</text><rect x="146" y="795" width="1" height="3" fill="#000"/><rect x="153" y="795" width="1" height="3" fill="#000"/><text x="153.7" y="809" text-anchor="middle" class="bl">6</text><rect x="161" y="795" width="1" height="3" fill="#000"/><rect x="169" y="795" width="1" height="3" fill="#000"/><text x="169.1" y="809" text-anchor="middle" class="bl">8</text><rect x="176" y="795" width="1" height="3" fill="#000"/><rect x="184" y="795" width="1" height="3" fill="#000"/><text x="184.5" y="809" text-anchor="middle" class="bl">10</text><rect x="192" y="795" width="1" height="3" fill="#000"/><rect x="199" y="795" width="1" height="3" fill="#000"/><text x="199.9" y="809" text-anchor="middle" class="bl">12</text><rect x="207" y="795" width="1" height="3" fill="#000"/><rect x="215" y="795" width="1" height="3" fill="#000"/><text x="215.3" y="809" text-anchor="middle" class="bl">14</text><rect x="222" y="795" width="1" height="3" fill="#000"/><rect x="230" y="795" width="1" height="3" fill="#000"/><text x="230.7" y="809" text-anchor="middle" class="bl">16</text><rect x="238" y="795" width="1" height="3" fill="#000"/><rect x="246" y="795" width="1" height="3" fill="#000"/><text x="246.1" y="809" text-anchor="middle" class="bl">18</text><rect x="253" y="795" width="1" height="3" fill="#000"/><rect x="261" y="795" width="1" height="3" fill="#000"/><text x="261.5" y="809" text-anchor="middle" class="bl">20</text><rect x="269" y="795" width="1" height="3" fill="#000"/><rect x="276" y="795" width="1" height="3" fill="#000"/><text x="276.9" y="809" text-anchor="middle" class="bl">22</text><rect x="284" y="795" width="1" height="3" fill="#000"/><rect x="292" y="795" width="1" height="3" fill="#000"/><text x="292.3" y="809" text-anchor="middle" class="bl">24</text><rect x="300" y="795" width="1" height="3" fill="#000"/><rect x="307" y="795" width="1" height="3" fill="#000"/><text x="307.70000000000005" y="809" text-anchor="middle" class="bl">26</text><rect x="315" y="795" width="1" height="3" fill="#000"/><rect x="323" y="795" width="1" height="3" fill="#000"/><text x="323.1" y="809" text-anchor="middle" class="bl">28</text><rect x="330" y="795" width="1" height="3" fill="#000"/><rect x="338" y="795" width="1" height="3" fill="#000"/><text x="338.5" y="809" text-anchor="middle" class="bl">30</text><rect x="346" y="795" width="1" height="3" fill="#000"/><rect x="353" y="795" width="1" height="3" fill="#000"/><text x="353.9" y="809" text-anchor="middle" class="bl">32</text><rect x="361" y="795" width="1" height="3" fill="#000"/><rect x="369" y="795" width="1" height="3" fill="#000"/><text x="369.3" y="809" text-anchor="middle" class="bl">34</text><rect x="376" y="795" width="1" height="3" fill="#000"/><rect x="384" y="795" width="1" height="3" fill="#000"/><text x="384.7" y="809" text-anchor="middle" class="bl">36</text><rect x="392" y="795" width="1" height="3" fill="#000"/><rect x="400" y="795" width="1" height="3" fill="#000"/><text x="400.1" y="809" text-anchor="middle" class="bl">38</text><rect x="407" y="795" width="1" height="3" fill="#000"/><rect x="415" y="795" width="1" height="3" fill="#000"/><text x="415.5" y="809" text-anchor="middle" class="bl">40</text></svg>
</body></html>
